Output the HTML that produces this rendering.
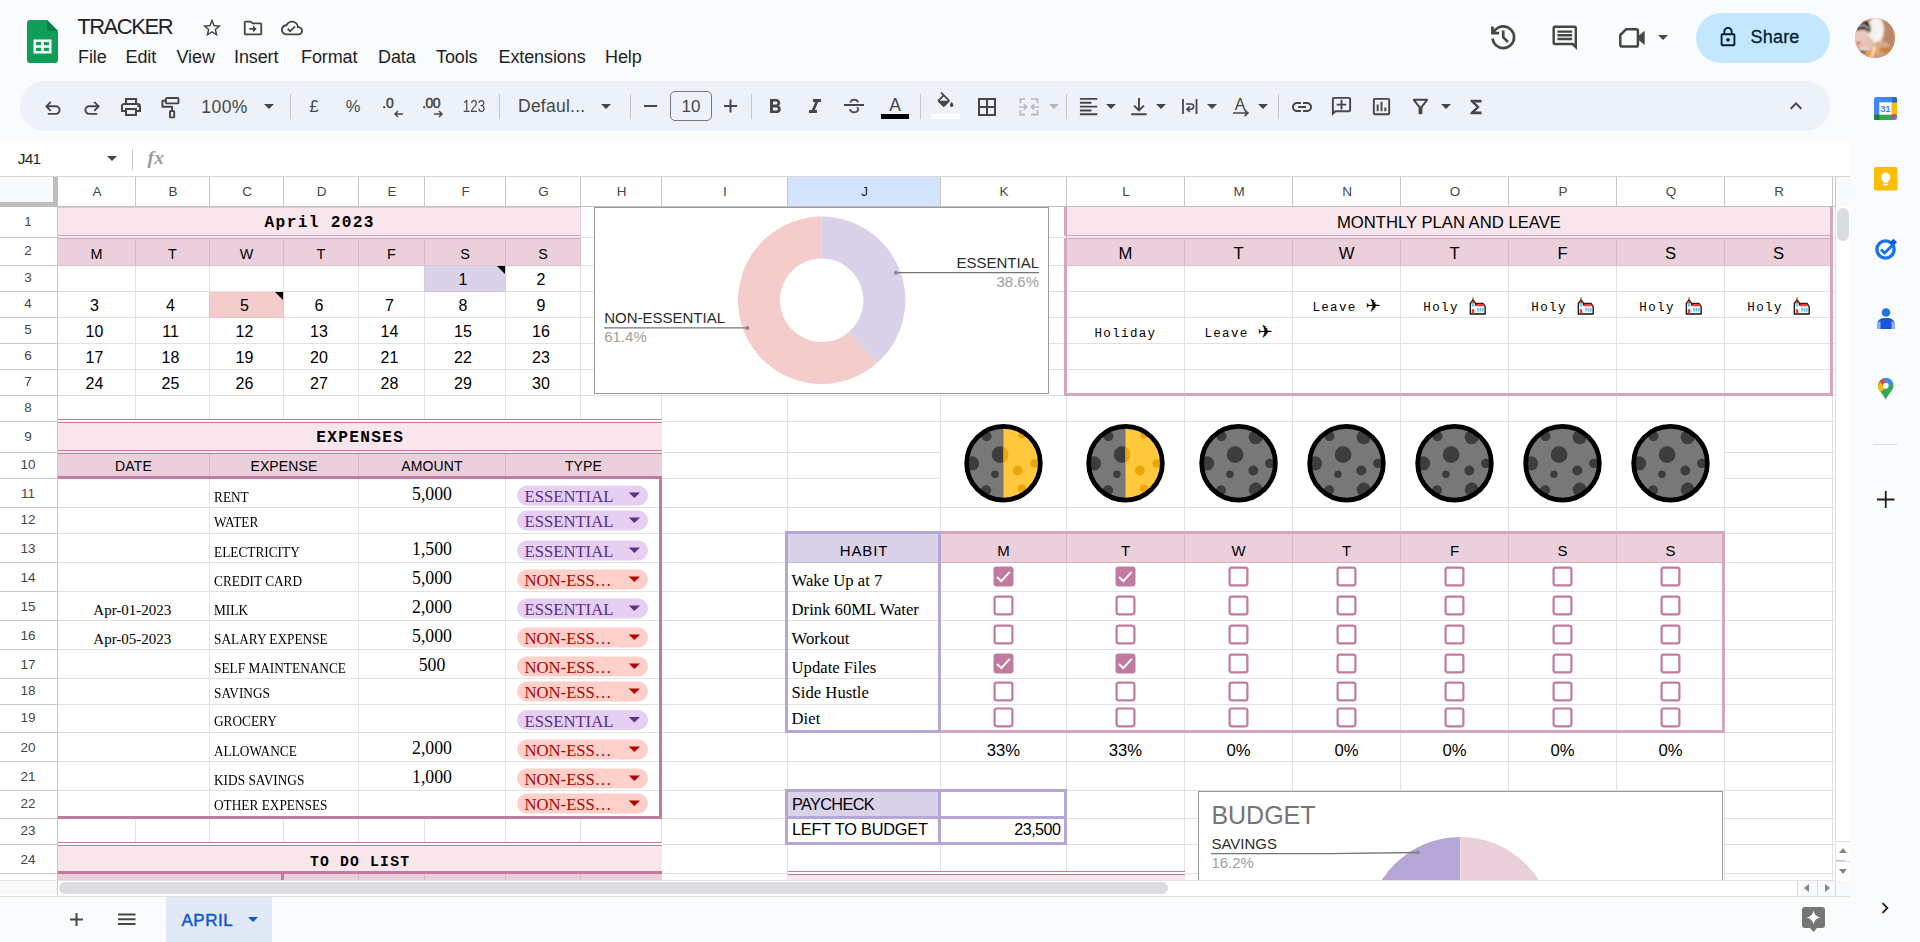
<!DOCTYPE html><html lang="en"><head><meta charset="utf-8"><title>TRACKER - Google Sheets</title><style>
html,body{margin:0;padding:0}body{width:1920px;height:942px;position:relative;overflow:hidden;background:#f9fbfd;font-family:"Liberation Sans",sans-serif}
.t{position:absolute;white-space:nowrap;line-height:1}.a{position:absolute}svg{display:block;overflow:visible}.chw{display:inline-block;position:relative;width:18px;height:0}.chw svg{position:absolute;left:1px;top:-14px}
#sheet{position:absolute;left:0;top:0;width:1850px;height:880px;overflow:hidden}
</style></head><body>
<main id="sheet" aria-label="Spreadsheet grid">
<svg class="a" style="left:0;top:0" width="1850" height="942" viewBox="0 0 1850 942" shape-rendering="crispEdges" aria-hidden="true">
<rect x="0" y="177" width="1850" height="703" fill="#fff"/>
<rect x="135" y="207" width="1" height="673" fill="#e1e1e1"/>
<rect x="209" y="207" width="1" height="673" fill="#e1e1e1"/>
<rect x="283" y="207" width="1" height="673" fill="#e1e1e1"/>
<rect x="358" y="207" width="1" height="673" fill="#e1e1e1"/>
<rect x="424" y="207" width="1" height="673" fill="#e1e1e1"/>
<rect x="505" y="207" width="1" height="673" fill="#e1e1e1"/>
<rect x="580" y="207" width="1" height="673" fill="#e1e1e1"/>
<rect x="661" y="207" width="1" height="673" fill="#e1e1e1"/>
<rect x="787" y="207" width="1" height="673" fill="#e1e1e1"/>
<rect x="940" y="207" width="1" height="673" fill="#e1e1e1"/>
<rect x="1066" y="207" width="1" height="673" fill="#e1e1e1"/>
<rect x="1184" y="207" width="1" height="673" fill="#e1e1e1"/>
<rect x="1292" y="207" width="1" height="673" fill="#e1e1e1"/>
<rect x="1400" y="207" width="1" height="673" fill="#e1e1e1"/>
<rect x="1508" y="207" width="1" height="673" fill="#e1e1e1"/>
<rect x="1616" y="207" width="1" height="673" fill="#e1e1e1"/>
<rect x="1724" y="207" width="1" height="673" fill="#e1e1e1"/>
<rect x="1832" y="207" width="1" height="673" fill="#e1e1e1"/>
<rect x="1835" y="207" width="1" height="673" fill="#e1e1e1"/>
<rect x="58" y="237" width="1778" height="1" fill="#e1e1e1"/>
<rect x="58" y="265" width="1778" height="1" fill="#e1e1e1"/>
<rect x="58" y="291" width="1778" height="1" fill="#e1e1e1"/>
<rect x="58" y="317" width="1778" height="1" fill="#e1e1e1"/>
<rect x="58" y="343" width="1778" height="1" fill="#e1e1e1"/>
<rect x="58" y="369" width="1778" height="1" fill="#e1e1e1"/>
<rect x="58" y="395" width="1778" height="1" fill="#e1e1e1"/>
<rect x="58" y="421" width="1778" height="1" fill="#e1e1e1"/>
<rect x="58" y="452" width="1778" height="1" fill="#e1e1e1"/>
<rect x="58" y="478" width="1778" height="1" fill="#e1e1e1"/>
<rect x="58" y="507" width="1778" height="1" fill="#e1e1e1"/>
<rect x="58" y="533" width="1778" height="1" fill="#e1e1e1"/>
<rect x="58" y="562" width="1778" height="1" fill="#e1e1e1"/>
<rect x="58" y="591" width="1778" height="1" fill="#e1e1e1"/>
<rect x="58" y="620" width="1778" height="1" fill="#e1e1e1"/>
<rect x="58" y="649" width="1778" height="1" fill="#e1e1e1"/>
<rect x="58" y="678" width="1778" height="1" fill="#e1e1e1"/>
<rect x="58" y="704" width="1778" height="1" fill="#e1e1e1"/>
<rect x="58" y="732" width="1778" height="1" fill="#e1e1e1"/>
<rect x="58" y="761" width="1778" height="1" fill="#e1e1e1"/>
<rect x="58" y="790" width="1778" height="1" fill="#e1e1e1"/>
<rect x="58" y="818" width="1778" height="1" fill="#e1e1e1"/>
<rect x="58" y="844" width="1778" height="1" fill="#e1e1e1"/>
<rect x="58" y="873" width="1778" height="1" fill="#e1e1e1"/>
<rect x="58" y="479" width="151" height="28" fill="#fff"/>
<rect x="210" y="479" width="148" height="28" fill="#fff"/>
<rect x="359" y="479" width="146" height="28" fill="#fff"/>
<rect x="506" y="479" width="155" height="28" fill="#fff"/>
<rect x="58" y="508" width="151" height="25" fill="#fff"/>
<rect x="210" y="508" width="148" height="25" fill="#fff"/>
<rect x="359" y="508" width="146" height="25" fill="#fff"/>
<rect x="506" y="508" width="155" height="25" fill="#fff"/>
<rect x="58" y="534" width="151" height="28" fill="#fff"/>
<rect x="210" y="534" width="148" height="28" fill="#fff"/>
<rect x="359" y="534" width="146" height="28" fill="#fff"/>
<rect x="506" y="534" width="155" height="28" fill="#fff"/>
<rect x="58" y="563" width="151" height="28" fill="#fff"/>
<rect x="210" y="563" width="148" height="28" fill="#fff"/>
<rect x="359" y="563" width="146" height="28" fill="#fff"/>
<rect x="506" y="563" width="155" height="28" fill="#fff"/>
<rect x="58" y="592" width="151" height="28" fill="#fff"/>
<rect x="210" y="592" width="148" height="28" fill="#fff"/>
<rect x="359" y="592" width="146" height="28" fill="#fff"/>
<rect x="506" y="592" width="155" height="28" fill="#fff"/>
<rect x="58" y="621" width="151" height="28" fill="#fff"/>
<rect x="210" y="621" width="148" height="28" fill="#fff"/>
<rect x="359" y="621" width="146" height="28" fill="#fff"/>
<rect x="506" y="621" width="155" height="28" fill="#fff"/>
<rect x="58" y="650" width="151" height="28" fill="#fff"/>
<rect x="210" y="650" width="148" height="28" fill="#fff"/>
<rect x="359" y="650" width="146" height="28" fill="#fff"/>
<rect x="506" y="650" width="155" height="28" fill="#fff"/>
<rect x="58" y="679" width="151" height="25" fill="#fff"/>
<rect x="210" y="679" width="148" height="25" fill="#fff"/>
<rect x="359" y="679" width="146" height="25" fill="#fff"/>
<rect x="506" y="679" width="155" height="25" fill="#fff"/>
<rect x="58" y="705" width="151" height="27" fill="#fff"/>
<rect x="210" y="705" width="148" height="27" fill="#fff"/>
<rect x="359" y="705" width="146" height="27" fill="#fff"/>
<rect x="506" y="705" width="155" height="27" fill="#fff"/>
<rect x="58" y="733" width="151" height="28" fill="#fff"/>
<rect x="210" y="733" width="148" height="28" fill="#fff"/>
<rect x="359" y="733" width="146" height="28" fill="#fff"/>
<rect x="506" y="733" width="155" height="28" fill="#fff"/>
<rect x="58" y="762" width="151" height="28" fill="#fff"/>
<rect x="210" y="762" width="148" height="28" fill="#fff"/>
<rect x="359" y="762" width="146" height="28" fill="#fff"/>
<rect x="506" y="762" width="155" height="28" fill="#fff"/>
<rect x="58" y="791" width="151" height="27" fill="#fff"/>
<rect x="210" y="791" width="148" height="27" fill="#fff"/>
<rect x="359" y="791" width="146" height="27" fill="#fff"/>
<rect x="506" y="791" width="155" height="27" fill="#fff"/>
<rect x="941" y="422" width="125" height="85" fill="#fff"/>
<rect x="1067" y="422" width="117" height="85" fill="#fff"/>
<rect x="1185" y="422" width="107" height="85" fill="#fff"/>
<rect x="1293" y="422" width="107" height="85" fill="#fff"/>
<rect x="1401" y="422" width="107" height="85" fill="#fff"/>
<rect x="1509" y="422" width="107" height="85" fill="#fff"/>
<rect x="1617" y="422" width="107" height="85" fill="#fff"/>
<rect x="58" y="207" width="523" height="28" fill="#f9e6ed"/>
<rect x="58" y="207" width="523" height="1" fill="#e9c3d3"/>
<rect x="58" y="235" width="523" height="1" fill="#d5a6bd"/>
<rect x="58" y="236" width="523" height="2" fill="#f8e6ed"/>
<rect x="58" y="238" width="523" height="1" fill="#d5a6bd"/>
<rect x="58" y="239" width="523" height="27" fill="#ebcfdb"/>
<rect x="135" y="239" width="1" height="27" fill="#d9b9c8"/>
<rect x="209" y="239" width="1" height="27" fill="#d9b9c8"/>
<rect x="283" y="239" width="1" height="27" fill="#d9b9c8"/>
<rect x="358" y="239" width="1" height="27" fill="#d9b9c8"/>
<rect x="424" y="239" width="1" height="27" fill="#d9b9c8"/>
<rect x="505" y="239" width="1" height="27" fill="#d9b9c8"/>
<rect x="58" y="265" width="523" height="1" fill="#dcbfcc"/>
<rect x="580" y="207" width="1" height="28" fill="#ead3dc"/>
<rect x="580" y="239" width="1" height="27" fill="#d9bccb"/>
<rect x="424" y="266" width="82" height="26" fill="#cfc8df"/>
<rect x="425" y="266" width="80" height="25" fill="#d9d2e9"/>
<rect x="209" y="292" width="75" height="26" fill="#e9c2c2"/>
<rect x="210" y="292" width="73" height="25" fill="#f4cccc"/>
<polygon points="497,266 505,266 505,274" fill="#000" shape-rendering="geometricPrecision"/>
<polygon points="275,292 283,292 283,300" fill="#000" shape-rendering="geometricPrecision"/>
<rect x="58" y="419" width="604" height="1" fill="#c27ba0"/>
<rect x="58" y="420" width="604" height="2" fill="#fff"/>
<rect x="58" y="422" width="604" height="1" fill="#c27ba0"/>
<rect x="58" y="423" width="604" height="27" fill="#f9e6ed"/>
<rect x="58" y="450" width="604" height="1" fill="#c27ba0"/>
<rect x="58" y="451" width="604" height="2" fill="#f8e6ed"/>
<rect x="58" y="453" width="604" height="1" fill="#c27ba0"/>
<rect x="58" y="454" width="604" height="22" fill="#ebcfdb"/>
<rect x="209" y="454" width="1" height="22" fill="#d9b9c8"/>
<rect x="358" y="454" width="1" height="22" fill="#d9b9c8"/>
<rect x="505" y="454" width="1" height="22" fill="#d9b9c8"/>
<rect x="58" y="476" width="604" height="3" fill="#c27ba0"/>
<rect x="659" y="476" width="3" height="343" fill="#c27ba0"/>
<rect x="58" y="816" width="604" height="3" fill="#c27ba0"/>
<rect x="517" y="485.5" width="131" height="20" rx="10" fill="#e6cff2" shape-rendering="geometricPrecision"/>
<polygon points="628.75,492.5 640,492.5 634.4,498.1" fill="#5a3286" shape-rendering="geometricPrecision"/>
<rect x="517" y="510.5" width="131" height="20" rx="10" fill="#e6cff2" shape-rendering="geometricPrecision"/>
<polygon points="628.75,517.5 640,517.5 634.4,523.1" fill="#5a3286" shape-rendering="geometricPrecision"/>
<rect x="517" y="540.5" width="131" height="20" rx="10" fill="#e6cff2" shape-rendering="geometricPrecision"/>
<polygon points="628.75,547.5 640,547.5 634.4,553.1" fill="#5a3286" shape-rendering="geometricPrecision"/>
<rect x="517" y="569.5" width="131" height="20" rx="10" fill="#ffcfc9" shape-rendering="geometricPrecision"/>
<polygon points="628.75,576.5 640,576.5 634.4,582.1" fill="#b10202" shape-rendering="geometricPrecision"/>
<rect x="517" y="598.5" width="131" height="20" rx="10" fill="#e6cff2" shape-rendering="geometricPrecision"/>
<polygon points="628.75,605.5 640,605.5 634.4,611.1" fill="#5a3286" shape-rendering="geometricPrecision"/>
<rect x="517" y="627.5" width="131" height="20" rx="10" fill="#ffcfc9" shape-rendering="geometricPrecision"/>
<polygon points="628.75,634.5 640,634.5 634.4,640.1" fill="#b10202" shape-rendering="geometricPrecision"/>
<rect x="517" y="656.5" width="131" height="20" rx="10" fill="#ffcfc9" shape-rendering="geometricPrecision"/>
<polygon points="628.75,663.5 640,663.5 634.4,669.1" fill="#b10202" shape-rendering="geometricPrecision"/>
<rect x="517" y="681.5" width="131" height="20" rx="10" fill="#ffcfc9" shape-rendering="geometricPrecision"/>
<polygon points="628.75,688.5 640,688.5 634.4,694.1" fill="#b10202" shape-rendering="geometricPrecision"/>
<rect x="517" y="710" width="131" height="20" rx="10" fill="#e6cff2" shape-rendering="geometricPrecision"/>
<polygon points="628.75,717 640,717 634.4,722.6" fill="#5a3286" shape-rendering="geometricPrecision"/>
<rect x="517" y="739.5" width="131" height="20" rx="10" fill="#ffcfc9" shape-rendering="geometricPrecision"/>
<polygon points="628.75,746.5 640,746.5 634.4,752.1" fill="#b10202" shape-rendering="geometricPrecision"/>
<rect x="517" y="768.5" width="131" height="20" rx="10" fill="#ffcfc9" shape-rendering="geometricPrecision"/>
<polygon points="628.75,775.5 640,775.5 634.4,781.1" fill="#b10202" shape-rendering="geometricPrecision"/>
<rect x="517" y="793.6" width="131" height="20" rx="10" fill="#ffcfc9" shape-rendering="geometricPrecision"/>
<polygon points="628.75,800.6 640,800.6 634.4,806.2" fill="#b10202" shape-rendering="geometricPrecision"/>
<rect x="58" y="842" width="604" height="1" fill="#c27ba0"/>
<rect x="58" y="843" width="604" height="2" fill="#fff"/>
<rect x="58" y="845" width="604" height="1" fill="#c27ba0"/>
<rect x="58" y="846" width="604" height="25" fill="#f9e6ed"/>
<rect x="58" y="871" width="604" height="3" fill="#c27ba0"/>
<rect x="58" y="874" width="604" height="6" fill="#ebcfdb"/>
<rect x="281" y="874" width="3" height="6" fill="#c27ba0"/>
<rect x="358" y="874" width="1" height="6" fill="#d9b9c8"/>
<rect x="424" y="874" width="1" height="6" fill="#d9b9c8"/>
<rect x="505" y="874" width="1" height="6" fill="#d9b9c8"/>
<rect x="580" y="874" width="1" height="6" fill="#d9b9c8"/>
<rect x="1067" y="207" width="763" height="28" fill="#f9e6ed"/>
<rect x="1067" y="235" width="763" height="1" fill="#d5a6bd"/>
<rect x="1067" y="236" width="763" height="2" fill="#f8e6ed"/>
<rect x="1067" y="238" width="763" height="1" fill="#d5a6bd"/>
<rect x="1067" y="239" width="763" height="27" fill="#ebcfdb"/>
<rect x="1184" y="239" width="1" height="27" fill="#d9b9c8"/>
<rect x="1292" y="239" width="1" height="27" fill="#d9b9c8"/>
<rect x="1400" y="239" width="1" height="27" fill="#d9b9c8"/>
<rect x="1508" y="239" width="1" height="27" fill="#d9b9c8"/>
<rect x="1616" y="239" width="1" height="27" fill="#d9b9c8"/>
<rect x="1724" y="239" width="1" height="27" fill="#d9b9c8"/>
<rect x="1067" y="265" width="763" height="1" fill="#dcbfcc"/>
<rect x="1064" y="207" width="3" height="189" fill="#d5a6bd"/>
<rect x="1830" y="207" width="3" height="189" fill="#d5a6bd"/>
<rect x="1064" y="393" width="769" height="3" fill="#d5a6bd"/>
<rect x="1064" y="236" width="2" height="2" fill="#fff"/>
<defs><clipPath id="mc"><circle r="37"/></clipPath><clipPath id="mh"><rect x="0" y="-40" width="40" height="80"/></clipPath></defs>
<g transform="translate(1003.5,463.2)" shape-rendering="geometricPrecision"><circle r="37" fill="#787878"/><g clip-path="url(#mc)"><circle cx="-3.4" cy="-8.6" r="8.4" fill="#3d3d3d"/><circle cx="-31.5" cy="0.2" r="7.1" fill="#3d3d3d"/><circle cx="17.25" cy="-26" r="7" fill="#3d3d3d"/><circle cx="-17" cy="-27" r="5" fill="#3d3d3d"/><circle cx="31.3" cy="0.2" r="4.7" fill="#3d3d3d"/><circle cx="14.8" cy="7.3" r="5" fill="#3d3d3d"/><circle cx="-8.6" cy="11" r="3.75" fill="#3d3d3d"/><circle cx="-17.4" cy="27" r="5" fill="#3d3d3d"/><circle cx="17.25" cy="26.4" r="7" fill="#3d3d3d"/><g clip-path="url(#mh)"><circle r="37" fill="#ffc83d"/><circle cx="-3.4" cy="-8.6" r="8.4" fill="#eca60b"/><circle cx="18.4" cy="-28" r="3.4" fill="#eca60b"/><circle cx="31.1" cy="0.2" r="4.1" fill="#eca60b"/><circle cx="14.25" cy="7.3" r="5" fill="#eca60b"/><circle cx="18.4" cy="25.5" r="4.1" fill="#eca60b"/></g></g><circle r="36.85" fill="none" stroke="#000" stroke-width="4.7"/></g>
<g transform="translate(1125.5,463.2)" shape-rendering="geometricPrecision"><circle r="37" fill="#787878"/><g clip-path="url(#mc)"><circle cx="-3.4" cy="-8.6" r="8.4" fill="#3d3d3d"/><circle cx="-31.5" cy="0.2" r="7.1" fill="#3d3d3d"/><circle cx="17.25" cy="-26" r="7" fill="#3d3d3d"/><circle cx="-17" cy="-27" r="5" fill="#3d3d3d"/><circle cx="31.3" cy="0.2" r="4.7" fill="#3d3d3d"/><circle cx="14.8" cy="7.3" r="5" fill="#3d3d3d"/><circle cx="-8.6" cy="11" r="3.75" fill="#3d3d3d"/><circle cx="-17.4" cy="27" r="5" fill="#3d3d3d"/><circle cx="17.25" cy="26.4" r="7" fill="#3d3d3d"/><g clip-path="url(#mh)"><circle r="37" fill="#ffc83d"/><circle cx="-3.4" cy="-8.6" r="8.4" fill="#eca60b"/><circle cx="18.4" cy="-28" r="3.4" fill="#eca60b"/><circle cx="31.1" cy="0.2" r="4.1" fill="#eca60b"/><circle cx="14.25" cy="7.3" r="5" fill="#eca60b"/><circle cx="18.4" cy="25.5" r="4.1" fill="#eca60b"/></g></g><circle r="36.85" fill="none" stroke="#000" stroke-width="4.7"/></g>
<g transform="translate(1238.5,463.2)" shape-rendering="geometricPrecision"><circle r="37" fill="#787878"/><g clip-path="url(#mc)"><circle cx="-3.4" cy="-8.6" r="8.4" fill="#3d3d3d"/><circle cx="-31.5" cy="0.2" r="7.1" fill="#3d3d3d"/><circle cx="17.25" cy="-26" r="7" fill="#3d3d3d"/><circle cx="-17" cy="-27" r="5" fill="#3d3d3d"/><circle cx="31.3" cy="0.2" r="4.7" fill="#3d3d3d"/><circle cx="14.8" cy="7.3" r="5" fill="#3d3d3d"/><circle cx="-8.6" cy="11" r="3.75" fill="#3d3d3d"/><circle cx="-17.4" cy="27" r="5" fill="#3d3d3d"/><circle cx="17.25" cy="26.4" r="7" fill="#3d3d3d"/></g><circle r="36.85" fill="none" stroke="#000" stroke-width="4.7"/></g>
<g transform="translate(1346.5,463.2)" shape-rendering="geometricPrecision"><circle r="37" fill="#787878"/><g clip-path="url(#mc)"><circle cx="-3.4" cy="-8.6" r="8.4" fill="#3d3d3d"/><circle cx="-31.5" cy="0.2" r="7.1" fill="#3d3d3d"/><circle cx="17.25" cy="-26" r="7" fill="#3d3d3d"/><circle cx="-17" cy="-27" r="5" fill="#3d3d3d"/><circle cx="31.3" cy="0.2" r="4.7" fill="#3d3d3d"/><circle cx="14.8" cy="7.3" r="5" fill="#3d3d3d"/><circle cx="-8.6" cy="11" r="3.75" fill="#3d3d3d"/><circle cx="-17.4" cy="27" r="5" fill="#3d3d3d"/><circle cx="17.25" cy="26.4" r="7" fill="#3d3d3d"/></g><circle r="36.85" fill="none" stroke="#000" stroke-width="4.7"/></g>
<g transform="translate(1454.5,463.2)" shape-rendering="geometricPrecision"><circle r="37" fill="#787878"/><g clip-path="url(#mc)"><circle cx="-3.4" cy="-8.6" r="8.4" fill="#3d3d3d"/><circle cx="-31.5" cy="0.2" r="7.1" fill="#3d3d3d"/><circle cx="17.25" cy="-26" r="7" fill="#3d3d3d"/><circle cx="-17" cy="-27" r="5" fill="#3d3d3d"/><circle cx="31.3" cy="0.2" r="4.7" fill="#3d3d3d"/><circle cx="14.8" cy="7.3" r="5" fill="#3d3d3d"/><circle cx="-8.6" cy="11" r="3.75" fill="#3d3d3d"/><circle cx="-17.4" cy="27" r="5" fill="#3d3d3d"/><circle cx="17.25" cy="26.4" r="7" fill="#3d3d3d"/></g><circle r="36.85" fill="none" stroke="#000" stroke-width="4.7"/></g>
<g transform="translate(1562.5,463.2)" shape-rendering="geometricPrecision"><circle r="37" fill="#787878"/><g clip-path="url(#mc)"><circle cx="-3.4" cy="-8.6" r="8.4" fill="#3d3d3d"/><circle cx="-31.5" cy="0.2" r="7.1" fill="#3d3d3d"/><circle cx="17.25" cy="-26" r="7" fill="#3d3d3d"/><circle cx="-17" cy="-27" r="5" fill="#3d3d3d"/><circle cx="31.3" cy="0.2" r="4.7" fill="#3d3d3d"/><circle cx="14.8" cy="7.3" r="5" fill="#3d3d3d"/><circle cx="-8.6" cy="11" r="3.75" fill="#3d3d3d"/><circle cx="-17.4" cy="27" r="5" fill="#3d3d3d"/><circle cx="17.25" cy="26.4" r="7" fill="#3d3d3d"/></g><circle r="36.85" fill="none" stroke="#000" stroke-width="4.7"/></g>
<g transform="translate(1670.5,463.2)" shape-rendering="geometricPrecision"><circle r="37" fill="#787878"/><g clip-path="url(#mc)"><circle cx="-3.4" cy="-8.6" r="8.4" fill="#3d3d3d"/><circle cx="-31.5" cy="0.2" r="7.1" fill="#3d3d3d"/><circle cx="17.25" cy="-26" r="7" fill="#3d3d3d"/><circle cx="-17" cy="-27" r="5" fill="#3d3d3d"/><circle cx="31.3" cy="0.2" r="4.7" fill="#3d3d3d"/><circle cx="14.8" cy="7.3" r="5" fill="#3d3d3d"/><circle cx="-8.6" cy="11" r="3.75" fill="#3d3d3d"/><circle cx="-17.4" cy="27" r="5" fill="#3d3d3d"/><circle cx="17.25" cy="26.4" r="7" fill="#3d3d3d"/></g><circle r="36.85" fill="none" stroke="#000" stroke-width="4.7"/></g>
<rect x="788" y="534" width="150" height="29" fill="#d9d2e9"/>
<rect x="941" y="534" width="781" height="29" fill="#ebcfdb"/>
<rect x="941" y="531" width="784" height="3" fill="#d5a6bd"/>
<rect x="1066" y="534" width="1" height="29" fill="#d9b9c8"/>
<rect x="1184" y="534" width="1" height="29" fill="#d9b9c8"/>
<rect x="1292" y="534" width="1" height="29" fill="#d9b9c8"/>
<rect x="1400" y="534" width="1" height="29" fill="#d9b9c8"/>
<rect x="1508" y="534" width="1" height="29" fill="#d9b9c8"/>
<rect x="1616" y="534" width="1" height="29" fill="#d9b9c8"/>
<rect x="941" y="562" width="781" height="1" fill="#d0b0be"/>
<rect x="1722" y="531" width="3" height="202" fill="#d5a6bd"/>
<rect x="941" y="730" width="784" height="3" fill="#d5a6bd"/>
<rect x="785" y="531" width="3" height="202" fill="#b4a7d6"/>
<rect x="938" y="531" width="3" height="202" fill="#b4a7d6"/>
<rect x="785" y="531" width="156" height="3" fill="#b4a7d6"/>
<rect x="785" y="730" width="156" height="3" fill="#b4a7d6"/>
<rect x="788" y="562" width="150" height="1" fill="#c5bcd9"/>
<g shape-rendering="geometricPrecision"><rect x="993.5" y="566.5" width="20" height="20" rx="3" fill="#c27ba0"/><path d="M997.0 577.0 L1001.3 581.1 L1009.8 571.9" fill="none" stroke="#fff" stroke-width="2"/></g>
<g shape-rendering="geometricPrecision"><rect x="1115.5" y="566.5" width="20" height="20" rx="3" fill="#c27ba0"/><path d="M1119.0 577.0 L1123.3 581.1 L1131.8 571.9" fill="none" stroke="#fff" stroke-width="2"/></g>
<rect x="1229.6" y="567.6" width="17.8" height="17.8" rx="2.2" fill="#fff" stroke="#c27ba0" stroke-width="2.2" shape-rendering="geometricPrecision"/>
<rect x="1337.6" y="567.6" width="17.8" height="17.8" rx="2.2" fill="#fff" stroke="#c27ba0" stroke-width="2.2" shape-rendering="geometricPrecision"/>
<rect x="1445.6" y="567.6" width="17.8" height="17.8" rx="2.2" fill="#fff" stroke="#c27ba0" stroke-width="2.2" shape-rendering="geometricPrecision"/>
<rect x="1553.6" y="567.6" width="17.8" height="17.8" rx="2.2" fill="#fff" stroke="#c27ba0" stroke-width="2.2" shape-rendering="geometricPrecision"/>
<rect x="1661.6" y="567.6" width="17.8" height="17.8" rx="2.2" fill="#fff" stroke="#c27ba0" stroke-width="2.2" shape-rendering="geometricPrecision"/>
<rect x="994.6" y="596.6" width="17.8" height="17.8" rx="2.2" fill="#fff" stroke="#c27ba0" stroke-width="2.2" shape-rendering="geometricPrecision"/>
<rect x="1116.6" y="596.6" width="17.8" height="17.8" rx="2.2" fill="#fff" stroke="#c27ba0" stroke-width="2.2" shape-rendering="geometricPrecision"/>
<rect x="1229.6" y="596.6" width="17.8" height="17.8" rx="2.2" fill="#fff" stroke="#c27ba0" stroke-width="2.2" shape-rendering="geometricPrecision"/>
<rect x="1337.6" y="596.6" width="17.8" height="17.8" rx="2.2" fill="#fff" stroke="#c27ba0" stroke-width="2.2" shape-rendering="geometricPrecision"/>
<rect x="1445.6" y="596.6" width="17.8" height="17.8" rx="2.2" fill="#fff" stroke="#c27ba0" stroke-width="2.2" shape-rendering="geometricPrecision"/>
<rect x="1553.6" y="596.6" width="17.8" height="17.8" rx="2.2" fill="#fff" stroke="#c27ba0" stroke-width="2.2" shape-rendering="geometricPrecision"/>
<rect x="1661.6" y="596.6" width="17.8" height="17.8" rx="2.2" fill="#fff" stroke="#c27ba0" stroke-width="2.2" shape-rendering="geometricPrecision"/>
<rect x="994.6" y="625.6" width="17.8" height="17.8" rx="2.2" fill="#fff" stroke="#c27ba0" stroke-width="2.2" shape-rendering="geometricPrecision"/>
<rect x="1116.6" y="625.6" width="17.8" height="17.8" rx="2.2" fill="#fff" stroke="#c27ba0" stroke-width="2.2" shape-rendering="geometricPrecision"/>
<rect x="1229.6" y="625.6" width="17.8" height="17.8" rx="2.2" fill="#fff" stroke="#c27ba0" stroke-width="2.2" shape-rendering="geometricPrecision"/>
<rect x="1337.6" y="625.6" width="17.8" height="17.8" rx="2.2" fill="#fff" stroke="#c27ba0" stroke-width="2.2" shape-rendering="geometricPrecision"/>
<rect x="1445.6" y="625.6" width="17.8" height="17.8" rx="2.2" fill="#fff" stroke="#c27ba0" stroke-width="2.2" shape-rendering="geometricPrecision"/>
<rect x="1553.6" y="625.6" width="17.8" height="17.8" rx="2.2" fill="#fff" stroke="#c27ba0" stroke-width="2.2" shape-rendering="geometricPrecision"/>
<rect x="1661.6" y="625.6" width="17.8" height="17.8" rx="2.2" fill="#fff" stroke="#c27ba0" stroke-width="2.2" shape-rendering="geometricPrecision"/>
<g shape-rendering="geometricPrecision"><rect x="993.5" y="653.5" width="20" height="20" rx="3" fill="#c27ba0"/><path d="M997.0 664.0 L1001.3 668.1 L1009.8 658.9" fill="none" stroke="#fff" stroke-width="2"/></g>
<g shape-rendering="geometricPrecision"><rect x="1115.5" y="653.5" width="20" height="20" rx="3" fill="#c27ba0"/><path d="M1119.0 664.0 L1123.3 668.1 L1131.8 658.9" fill="none" stroke="#fff" stroke-width="2"/></g>
<rect x="1229.6" y="654.6" width="17.8" height="17.8" rx="2.2" fill="#fff" stroke="#c27ba0" stroke-width="2.2" shape-rendering="geometricPrecision"/>
<rect x="1337.6" y="654.6" width="17.8" height="17.8" rx="2.2" fill="#fff" stroke="#c27ba0" stroke-width="2.2" shape-rendering="geometricPrecision"/>
<rect x="1445.6" y="654.6" width="17.8" height="17.8" rx="2.2" fill="#fff" stroke="#c27ba0" stroke-width="2.2" shape-rendering="geometricPrecision"/>
<rect x="1553.6" y="654.6" width="17.8" height="17.8" rx="2.2" fill="#fff" stroke="#c27ba0" stroke-width="2.2" shape-rendering="geometricPrecision"/>
<rect x="1661.6" y="654.6" width="17.8" height="17.8" rx="2.2" fill="#fff" stroke="#c27ba0" stroke-width="2.2" shape-rendering="geometricPrecision"/>
<rect x="994.6" y="682.6" width="17.8" height="17.8" rx="2.2" fill="#fff" stroke="#c27ba0" stroke-width="2.2" shape-rendering="geometricPrecision"/>
<rect x="1116.6" y="682.6" width="17.8" height="17.8" rx="2.2" fill="#fff" stroke="#c27ba0" stroke-width="2.2" shape-rendering="geometricPrecision"/>
<rect x="1229.6" y="682.6" width="17.8" height="17.8" rx="2.2" fill="#fff" stroke="#c27ba0" stroke-width="2.2" shape-rendering="geometricPrecision"/>
<rect x="1337.6" y="682.6" width="17.8" height="17.8" rx="2.2" fill="#fff" stroke="#c27ba0" stroke-width="2.2" shape-rendering="geometricPrecision"/>
<rect x="1445.6" y="682.6" width="17.8" height="17.8" rx="2.2" fill="#fff" stroke="#c27ba0" stroke-width="2.2" shape-rendering="geometricPrecision"/>
<rect x="1553.6" y="682.6" width="17.8" height="17.8" rx="2.2" fill="#fff" stroke="#c27ba0" stroke-width="2.2" shape-rendering="geometricPrecision"/>
<rect x="1661.6" y="682.6" width="17.8" height="17.8" rx="2.2" fill="#fff" stroke="#c27ba0" stroke-width="2.2" shape-rendering="geometricPrecision"/>
<rect x="994.6" y="708.5" width="17.8" height="17.8" rx="2.2" fill="#fff" stroke="#c27ba0" stroke-width="2.2" shape-rendering="geometricPrecision"/>
<rect x="1116.6" y="708.5" width="17.8" height="17.8" rx="2.2" fill="#fff" stroke="#c27ba0" stroke-width="2.2" shape-rendering="geometricPrecision"/>
<rect x="1229.6" y="708.5" width="17.8" height="17.8" rx="2.2" fill="#fff" stroke="#c27ba0" stroke-width="2.2" shape-rendering="geometricPrecision"/>
<rect x="1337.6" y="708.5" width="17.8" height="17.8" rx="2.2" fill="#fff" stroke="#c27ba0" stroke-width="2.2" shape-rendering="geometricPrecision"/>
<rect x="1445.6" y="708.5" width="17.8" height="17.8" rx="2.2" fill="#fff" stroke="#c27ba0" stroke-width="2.2" shape-rendering="geometricPrecision"/>
<rect x="1553.6" y="708.5" width="17.8" height="17.8" rx="2.2" fill="#fff" stroke="#c27ba0" stroke-width="2.2" shape-rendering="geometricPrecision"/>
<rect x="1661.6" y="708.5" width="17.8" height="17.8" rx="2.2" fill="#fff" stroke="#c27ba0" stroke-width="2.2" shape-rendering="geometricPrecision"/>
<rect x="788" y="792" width="150" height="24" fill="#d9d2e9"/>
<rect x="785" y="789" width="282" height="3" fill="#b4a7d6"/>
<rect x="785" y="816" width="282" height="3" fill="#b4a7d6"/>
<rect x="785" y="842" width="282" height="3" fill="#b4a7d6"/>
<rect x="785" y="789" width="3" height="56" fill="#b4a7d6"/>
<rect x="938" y="789" width="3" height="56" fill="#b4a7d6"/>
<rect x="1064" y="789" width="3" height="56" fill="#b4a7d6"/>
<rect x="788" y="871" width="397" height="1" fill="#c27ba0"/>
<rect x="788" y="872" width="397" height="2" fill="#fff"/>
<rect x="788" y="874" width="397" height="1" fill="#c27ba0"/>
<rect x="788" y="875" width="397" height="5" fill="#f9e6ed"/>
<rect x="594" y="207" width="455" height="187" fill="#999"/>
<rect x="595" y="208" width="453" height="185" fill="#fff"/>
<g shape-rendering="geometricPrecision">
<path d="M821.70 216.60 A83.7 83.7 0 0 1 876.66 363.43 L849.08 331.75 A41.7 41.7 0 0 0 821.70 258.60 Z" fill="#d9d2e9"/>
<path d="M876.66 363.43 A83.7 83.7 0 1 1 821.70 216.60 L821.70 258.60 A41.7 41.7 0 1 0 849.08 331.75 Z" fill="#f4cccc"/>
<path d="M895.9 272.7 H1039" stroke="#757575" stroke-width="1.3" fill="none"/><circle cx="895.9" cy="272.7" r="2" fill="#8a8a8a"/>
<path d="M604 327.9 H747.4" stroke="#757575" stroke-width="1.3" fill="none"/><circle cx="747.4" cy="327.9" r="2" fill="#8a8a8a"/>
</g>
<rect x="1198" y="791" width="525" height="110" fill="#999"/>
<rect x="1199" y="792" width="523" height="109" fill="#fff"/>
<g shape-rendering="geometricPrecision">
<path d="M1460.3 930 L1460.3 837 A93 93 0 0 0 1367.3 930 Z" fill="#b4a7d6"/>
<path d="M1460.3 930 L1460.3 837 A93 93 0 0 1 1553.3 930 Z" fill="#ebcfdb"/>
<path d="M1211 853.6 H1330 L1417.8 852.5" stroke="#757575" stroke-width="1.3" fill="none"/><circle cx="1417.8" cy="852.5" r="2" fill="#8a8a8a"/>
</g>
<rect x="0" y="176" width="1850" height="1" fill="#d5d5d5"/>
<rect x="0" y="177" width="1836" height="29" fill="#fff"/>
<rect x="788" y="177" width="152" height="29" fill="#d3e3fd"/>
<rect x="1836" y="177" width="14" height="29" fill="#f8f9fa"/>
<rect x="0" y="206" width="1836" height="1" fill="#c0c0c0"/>
<rect x="57" y="177" width="1" height="29" fill="#c7c7c7"/>
<rect x="135" y="177" width="1" height="29" fill="#c7c7c7"/>
<rect x="209" y="177" width="1" height="29" fill="#c7c7c7"/>
<rect x="283" y="177" width="1" height="29" fill="#c7c7c7"/>
<rect x="358" y="177" width="1" height="29" fill="#c7c7c7"/>
<rect x="424" y="177" width="1" height="29" fill="#c7c7c7"/>
<rect x="505" y="177" width="1" height="29" fill="#c7c7c7"/>
<rect x="580" y="177" width="1" height="29" fill="#c7c7c7"/>
<rect x="661" y="177" width="1" height="29" fill="#c7c7c7"/>
<rect x="787" y="177" width="1" height="29" fill="#c7c7c7"/>
<rect x="940" y="177" width="1" height="29" fill="#c7c7c7"/>
<rect x="1066" y="177" width="1" height="29" fill="#c7c7c7"/>
<rect x="1184" y="177" width="1" height="29" fill="#c7c7c7"/>
<rect x="1292" y="177" width="1" height="29" fill="#c7c7c7"/>
<rect x="1400" y="177" width="1" height="29" fill="#c7c7c7"/>
<rect x="1508" y="177" width="1" height="29" fill="#c7c7c7"/>
<rect x="1616" y="177" width="1" height="29" fill="#c7c7c7"/>
<rect x="1724" y="177" width="1" height="29" fill="#c7c7c7"/>
<rect x="1832" y="177" width="1" height="29" fill="#c7c7c7"/>
<rect x="1835" y="177" width="1" height="29" fill="#c7c7c7"/>
<rect x="0" y="177" width="57" height="29" fill="#f8f9fa"/>
<rect x="53" y="177" width="5" height="30" fill="#bdbdbd"/>
<rect x="0" y="202" width="58" height="5" fill="#bdbdbd"/>
<rect x="0" y="207" width="57" height="673" fill="#fff"/>
<rect x="57" y="207" width="1" height="673" fill="#c7c7c7"/>
<rect x="0" y="237" width="57" height="1" fill="#c7c7c7"/>
<rect x="0" y="265" width="57" height="1" fill="#c7c7c7"/>
<rect x="0" y="291" width="57" height="1" fill="#c7c7c7"/>
<rect x="0" y="317" width="57" height="1" fill="#c7c7c7"/>
<rect x="0" y="343" width="57" height="1" fill="#c7c7c7"/>
<rect x="0" y="369" width="57" height="1" fill="#c7c7c7"/>
<rect x="0" y="395" width="57" height="1" fill="#c7c7c7"/>
<rect x="0" y="421" width="57" height="1" fill="#c7c7c7"/>
<rect x="0" y="452" width="57" height="1" fill="#c7c7c7"/>
<rect x="0" y="478" width="57" height="1" fill="#c7c7c7"/>
<rect x="0" y="507" width="57" height="1" fill="#c7c7c7"/>
<rect x="0" y="533" width="57" height="1" fill="#c7c7c7"/>
<rect x="0" y="562" width="57" height="1" fill="#c7c7c7"/>
<rect x="0" y="591" width="57" height="1" fill="#c7c7c7"/>
<rect x="0" y="620" width="57" height="1" fill="#c7c7c7"/>
<rect x="0" y="649" width="57" height="1" fill="#c7c7c7"/>
<rect x="0" y="678" width="57" height="1" fill="#c7c7c7"/>
<rect x="0" y="704" width="57" height="1" fill="#c7c7c7"/>
<rect x="0" y="732" width="57" height="1" fill="#c7c7c7"/>
<rect x="0" y="761" width="57" height="1" fill="#c7c7c7"/>
<rect x="0" y="790" width="57" height="1" fill="#c7c7c7"/>
<rect x="0" y="818" width="57" height="1" fill="#c7c7c7"/>
<rect x="0" y="844" width="57" height="1" fill="#c7c7c7"/>
<rect x="0" y="873" width="57" height="1" fill="#c7c7c7"/>
</svg>
<section id="cells">
<div class="t" style='top:215px;font:bold 16.2px/1 "Liberation Mono", monospace;color:#000;letter-spacing:1.3px;left:19.70px;width:600px;text-align:center;'>April 2023</div>
<div class="t" style='top:247px;font:14.4px/1 "Liberation Sans", sans-serif;color:#000;left:-203.50px;width:600px;text-align:center;'>M</div>
<div class="t" style='top:247px;font:14.4px/1 "Liberation Sans", sans-serif;color:#000;left:-127.50px;width:600px;text-align:center;'>T</div>
<div class="t" style='top:247px;font:14.4px/1 "Liberation Sans", sans-serif;color:#000;left:-53.50px;width:600px;text-align:center;'>W</div>
<div class="t" style='top:247px;font:14.4px/1 "Liberation Sans", sans-serif;color:#000;left:21.00px;width:600px;text-align:center;'>T</div>
<div class="t" style='top:247px;font:14.4px/1 "Liberation Sans", sans-serif;color:#000;left:91.50px;width:600px;text-align:center;'>F</div>
<div class="t" style='top:247px;font:14.4px/1 "Liberation Sans", sans-serif;color:#000;left:165.00px;width:600px;text-align:center;'>S</div>
<div class="t" style='top:247px;font:14.4px/1 "Liberation Sans", sans-serif;color:#000;left:243.00px;width:600px;text-align:center;'>S</div>
<div class="t" style='top:272px;font:16px/1 "Liberation Sans", sans-serif;color:#000;left:163.00px;width:600px;text-align:center;'>1</div>
<div class="t" style='top:272px;font:16px/1 "Liberation Sans", sans-serif;color:#000;left:241.00px;width:600px;text-align:center;'>2</div>
<div class="t" style='top:298px;font:16px/1 "Liberation Sans", sans-serif;color:#000;left:-205.50px;width:600px;text-align:center;'>3</div>
<div class="t" style='top:298px;font:16px/1 "Liberation Sans", sans-serif;color:#000;left:-129.50px;width:600px;text-align:center;'>4</div>
<div class="t" style='top:298px;font:16px/1 "Liberation Sans", sans-serif;color:#000;left:-55.50px;width:600px;text-align:center;'>5</div>
<div class="t" style='top:298px;font:16px/1 "Liberation Sans", sans-serif;color:#000;left:19.00px;width:600px;text-align:center;'>6</div>
<div class="t" style='top:298px;font:16px/1 "Liberation Sans", sans-serif;color:#000;left:89.50px;width:600px;text-align:center;'>7</div>
<div class="t" style='top:298px;font:16px/1 "Liberation Sans", sans-serif;color:#000;left:163.00px;width:600px;text-align:center;'>8</div>
<div class="t" style='top:298px;font:16px/1 "Liberation Sans", sans-serif;color:#000;left:241.00px;width:600px;text-align:center;'>9</div>
<div class="t" style='top:324px;font:16px/1 "Liberation Sans", sans-serif;color:#000;left:-205.50px;width:600px;text-align:center;'>10</div>
<div class="t" style='top:324px;font:16px/1 "Liberation Sans", sans-serif;color:#000;left:-129.50px;width:600px;text-align:center;'>11</div>
<div class="t" style='top:324px;font:16px/1 "Liberation Sans", sans-serif;color:#000;left:-55.50px;width:600px;text-align:center;'>12</div>
<div class="t" style='top:324px;font:16px/1 "Liberation Sans", sans-serif;color:#000;left:19.00px;width:600px;text-align:center;'>13</div>
<div class="t" style='top:324px;font:16px/1 "Liberation Sans", sans-serif;color:#000;left:89.50px;width:600px;text-align:center;'>14</div>
<div class="t" style='top:324px;font:16px/1 "Liberation Sans", sans-serif;color:#000;left:163.00px;width:600px;text-align:center;'>15</div>
<div class="t" style='top:324px;font:16px/1 "Liberation Sans", sans-serif;color:#000;left:241.00px;width:600px;text-align:center;'>16</div>
<div class="t" style='top:350px;font:16px/1 "Liberation Sans", sans-serif;color:#000;left:-205.50px;width:600px;text-align:center;'>17</div>
<div class="t" style='top:350px;font:16px/1 "Liberation Sans", sans-serif;color:#000;left:-129.50px;width:600px;text-align:center;'>18</div>
<div class="t" style='top:350px;font:16px/1 "Liberation Sans", sans-serif;color:#000;left:-55.50px;width:600px;text-align:center;'>19</div>
<div class="t" style='top:350px;font:16px/1 "Liberation Sans", sans-serif;color:#000;left:19.00px;width:600px;text-align:center;'>20</div>
<div class="t" style='top:350px;font:16px/1 "Liberation Sans", sans-serif;color:#000;left:89.50px;width:600px;text-align:center;'>21</div>
<div class="t" style='top:350px;font:16px/1 "Liberation Sans", sans-serif;color:#000;left:163.00px;width:600px;text-align:center;'>22</div>
<div class="t" style='top:350px;font:16px/1 "Liberation Sans", sans-serif;color:#000;left:241.00px;width:600px;text-align:center;'>23</div>
<div class="t" style='top:376px;font:16px/1 "Liberation Sans", sans-serif;color:#000;left:-205.50px;width:600px;text-align:center;'>24</div>
<div class="t" style='top:376px;font:16px/1 "Liberation Sans", sans-serif;color:#000;left:-129.50px;width:600px;text-align:center;'>25</div>
<div class="t" style='top:376px;font:16px/1 "Liberation Sans", sans-serif;color:#000;left:-55.50px;width:600px;text-align:center;'>26</div>
<div class="t" style='top:376px;font:16px/1 "Liberation Sans", sans-serif;color:#000;left:19.00px;width:600px;text-align:center;'>27</div>
<div class="t" style='top:376px;font:16px/1 "Liberation Sans", sans-serif;color:#000;left:89.50px;width:600px;text-align:center;'>28</div>
<div class="t" style='top:376px;font:16px/1 "Liberation Sans", sans-serif;color:#000;left:163.00px;width:600px;text-align:center;'>29</div>
<div class="t" style='top:376px;font:16px/1 "Liberation Sans", sans-serif;color:#000;left:241.00px;width:600px;text-align:center;'>30</div>
<div class="t" style='top:430px;font:bold 16.2px/1 "Liberation Mono", monospace;color:#000;letter-spacing:1.3px;left:60.20px;width:600px;text-align:center;'>EXPENSES</div>
<div class="t" style='top:459px;font:14px/1 "Liberation Sans", sans-serif;color:#000;letter-spacing:0.15px;left:-166.50px;width:600px;text-align:center;'>DATE</div>
<div class="t" style='top:459px;font:14px/1 "Liberation Sans", sans-serif;color:#000;letter-spacing:0.15px;left:-16.00px;width:600px;text-align:center;'>EXPENSE</div>
<div class="t" style='top:459px;font:14px/1 "Liberation Sans", sans-serif;color:#000;letter-spacing:0.15px;left:132.00px;width:600px;text-align:center;'>AMOUNT</div>
<div class="t" style='top:459px;font:14px/1 "Liberation Sans", sans-serif;color:#000;letter-spacing:0.15px;left:283.50px;width:600px;text-align:center;'>TYPE</div>
<div class="t" style='top:491px;font:13.9px/1 "Liberation Serif", serif;color:#000;left:213.75px;transform:scaleX(0.958);transform-origin:0 50%;'>RENT</div>
<div class="t" style='top:486px;font:17.8px/1 "Liberation Serif", serif;color:#000;left:132.00px;width:600px;text-align:center;'>5,000</div>
<div class="t" style='top:489px;font:16.67px/1 "Liberation Serif", serif;color:#5a3286;left:524.50px;'>ESSENTIAL</div>
<div class="t" style='top:516px;font:13.9px/1 "Liberation Serif", serif;color:#000;left:213.75px;transform:scaleX(0.958);transform-origin:0 50%;'>WATER</div>
<div class="t" style='top:514px;font:16.67px/1 "Liberation Serif", serif;color:#5a3286;left:524.50px;'>ESSENTIAL</div>
<div class="t" style='top:546px;font:13.9px/1 "Liberation Serif", serif;color:#000;left:213.75px;transform:scaleX(0.958);transform-origin:0 50%;'>ELECTRICITY</div>
<div class="t" style='top:541px;font:17.8px/1 "Liberation Serif", serif;color:#000;left:132.00px;width:600px;text-align:center;'>1,500</div>
<div class="t" style='top:544px;font:16.67px/1 "Liberation Serif", serif;color:#5a3286;left:524.50px;'>ESSENTIAL</div>
<div class="t" style='top:575px;font:13.9px/1 "Liberation Serif", serif;color:#000;left:213.75px;transform:scaleX(0.958);transform-origin:0 50%;'>CREDIT CARD</div>
<div class="t" style='top:570px;font:17.8px/1 "Liberation Serif", serif;color:#000;left:132.00px;width:600px;text-align:center;'>5,000</div>
<div class="t" style='top:573px;font:16.67px/1 "Liberation Serif", serif;color:#b10202;left:524.50px;'>NON-ESS…</div>
<div class="t" style='top:603px;font:15px/1 "Liberation Serif", serif;color:#000;left:-167.70px;width:600px;text-align:center;'>Apr-01-2023</div>
<div class="t" style='top:604px;font:13.9px/1 "Liberation Serif", serif;color:#000;left:213.75px;transform:scaleX(0.958);transform-origin:0 50%;'>MILK</div>
<div class="t" style='top:599px;font:17.8px/1 "Liberation Serif", serif;color:#000;left:132.00px;width:600px;text-align:center;'>2,000</div>
<div class="t" style='top:602px;font:16.67px/1 "Liberation Serif", serif;color:#5a3286;left:524.50px;'>ESSENTIAL</div>
<div class="t" style='top:632px;font:15px/1 "Liberation Serif", serif;color:#000;left:-167.70px;width:600px;text-align:center;'>Apr-05-2023</div>
<div class="t" style='top:633px;font:13.9px/1 "Liberation Serif", serif;color:#000;left:213.75px;transform:scaleX(0.958);transform-origin:0 50%;'>SALARY EXPENSE</div>
<div class="t" style='top:628px;font:17.8px/1 "Liberation Serif", serif;color:#000;left:132.00px;width:600px;text-align:center;'>5,000</div>
<div class="t" style='top:631px;font:16.67px/1 "Liberation Serif", serif;color:#b10202;left:524.50px;'>NON-ESS…</div>
<div class="t" style='top:662px;font:13.9px/1 "Liberation Serif", serif;color:#000;left:213.75px;transform:scaleX(0.958);transform-origin:0 50%;'>SELF MAINTENANCE</div>
<div class="t" style='top:657px;font:17.8px/1 "Liberation Serif", serif;color:#000;left:132.00px;width:600px;text-align:center;'>500</div>
<div class="t" style='top:660px;font:16.67px/1 "Liberation Serif", serif;color:#b10202;left:524.50px;'>NON-ESS…</div>
<div class="t" style='top:687px;font:13.9px/1 "Liberation Serif", serif;color:#000;left:213.75px;transform:scaleX(0.958);transform-origin:0 50%;'>SAVINGS</div>
<div class="t" style='top:685px;font:16.67px/1 "Liberation Serif", serif;color:#b10202;left:524.50px;'>NON-ESS…</div>
<div class="t" style='top:715px;font:13.9px/1 "Liberation Serif", serif;color:#000;left:213.75px;transform:scaleX(0.958);transform-origin:0 50%;'>GROCERY</div>
<div class="t" style='top:714px;font:16.67px/1 "Liberation Serif", serif;color:#5a3286;left:524.50px;'>ESSENTIAL</div>
<div class="t" style='top:745px;font:13.9px/1 "Liberation Serif", serif;color:#000;left:213.75px;transform:scaleX(0.958);transform-origin:0 50%;'>ALLOWANCE</div>
<div class="t" style='top:740px;font:17.8px/1 "Liberation Serif", serif;color:#000;left:132.00px;width:600px;text-align:center;'>2,000</div>
<div class="t" style='top:743px;font:16.67px/1 "Liberation Serif", serif;color:#b10202;left:524.50px;'>NON-ESS…</div>
<div class="t" style='top:774px;font:13.9px/1 "Liberation Serif", serif;color:#000;left:213.75px;transform:scaleX(0.958);transform-origin:0 50%;'>KIDS SAVINGS</div>
<div class="t" style='top:769px;font:17.8px/1 "Liberation Serif", serif;color:#000;left:132.00px;width:600px;text-align:center;'>1,000</div>
<div class="t" style='top:772px;font:16.67px/1 "Liberation Serif", serif;color:#b10202;left:524.50px;'>NON-ESS…</div>
<div class="t" style='top:799px;font:13.9px/1 "Liberation Serif", serif;color:#000;left:213.75px;transform:scaleX(0.958);transform-origin:0 50%;'>OTHER EXPENSES</div>
<div class="t" style='top:797px;font:16.67px/1 "Liberation Serif", serif;color:#b10202;left:524.50px;'>NON-ESS…</div>
<div class="t" style='top:855px;font:bold 14.7px/1 "Liberation Mono", monospace;color:#000;letter-spacing:1.2px;left:60.10px;width:600px;text-align:center;'>TO DO LIST</div>
<div class="t" style='top:215px;font:16.67px/1 "Liberation Sans", sans-serif;color:#000;left:1148.90px;width:600px;text-align:center;'>MONTHLY PLAN AND LEAVE</div>
<div class="t" style='top:246px;font:16.67px/1 "Liberation Sans", sans-serif;color:#000;left:825.50px;width:600px;text-align:center;'>M</div>
<div class="t" style='top:246px;font:16.67px/1 "Liberation Sans", sans-serif;color:#000;left:938.50px;width:600px;text-align:center;'>T</div>
<div class="t" style='top:246px;font:16.67px/1 "Liberation Sans", sans-serif;color:#000;left:1046.50px;width:600px;text-align:center;'>W</div>
<div class="t" style='top:246px;font:16.67px/1 "Liberation Sans", sans-serif;color:#000;left:1154.50px;width:600px;text-align:center;'>T</div>
<div class="t" style='top:246px;font:16.67px/1 "Liberation Sans", sans-serif;color:#000;left:1262.50px;width:600px;text-align:center;'>F</div>
<div class="t" style='top:246px;font:16.67px/1 "Liberation Sans", sans-serif;color:#000;left:1370.50px;width:600px;text-align:center;'>S</div>
<div class="t" style='top:246px;font:16.67px/1 "Liberation Sans", sans-serif;color:#000;left:1478.50px;width:600px;text-align:center;'>S</div>
<div class="t" style='top:302px;font:12.5px/1 "Liberation Mono", monospace;color:#000;letter-spacing:1.35px;left:1046.50px;width:600px;text-align:center;'>Leave <span style='font-family:"DejaVu Sans",sans-serif;font-size:18px;line-height:0;letter-spacing:0;position:relative;top:0.5px'>✈</span></div>
<div class="t" style='top:302px;font:12.5px/1 "Liberation Mono", monospace;color:#000;letter-spacing:1.35px;left:1154.50px;width:600px;text-align:center;'>Holy <span class="chw" role="img" aria-label="church"><svg class="ch" width="17" height="18" viewBox="0 0 17 18"><path d="M4 0.300 V2.500 M3 1.200 H5" stroke="#b8860b" stroke-width="0.900" fill="none"/><path d="M1.300 17 V6.300 L4 2.800 L6.700 6.300 V8 L8 6.300 H14 L16.200 9.500 V17 Z" fill="#f4f4f4" stroke="#111" stroke-width="1.300" stroke-linejoin="round"/><path d="M7 8.200 L8.300 6.800 H13.800 L15.600 9.300 H7 Z" fill="#e8413c"/><path d="M1.900 6.400 L4 3.700 L6.100 6.400 Z" fill="#e8413c"/><circle cx="4" cy="8.300" r="1.250" fill="#5cc3f0"/><path d="M2.800 16.400 V13.300 a1.200 1.200 0 0 1 2.400 0 V16.400 Z" fill="#e8413c"/><rect x="8.300" y="11" width="1.500" height="3.500" fill="#5cc3f0"/><rect x="10.700" y="11" width="1.500" height="3.500" fill="#5cc3f0"/><rect x="13.100" y="11" width="1.500" height="3.500" fill="#5cc3f0"/></svg></span></div>
<div class="t" style='top:302px;font:12.5px/1 "Liberation Mono", monospace;color:#000;letter-spacing:1.35px;left:1262.50px;width:600px;text-align:center;'>Holy <span class="chw" role="img" aria-label="church"><svg class="ch" width="17" height="18" viewBox="0 0 17 18"><path d="M4 0.300 V2.500 M3 1.200 H5" stroke="#b8860b" stroke-width="0.900" fill="none"/><path d="M1.300 17 V6.300 L4 2.800 L6.700 6.300 V8 L8 6.300 H14 L16.200 9.500 V17 Z" fill="#f4f4f4" stroke="#111" stroke-width="1.300" stroke-linejoin="round"/><path d="M7 8.200 L8.300 6.800 H13.800 L15.600 9.300 H7 Z" fill="#e8413c"/><path d="M1.900 6.400 L4 3.700 L6.100 6.400 Z" fill="#e8413c"/><circle cx="4" cy="8.300" r="1.250" fill="#5cc3f0"/><path d="M2.800 16.400 V13.300 a1.200 1.200 0 0 1 2.400 0 V16.400 Z" fill="#e8413c"/><rect x="8.300" y="11" width="1.500" height="3.500" fill="#5cc3f0"/><rect x="10.700" y="11" width="1.500" height="3.500" fill="#5cc3f0"/><rect x="13.100" y="11" width="1.500" height="3.500" fill="#5cc3f0"/></svg></span></div>
<div class="t" style='top:302px;font:12.5px/1 "Liberation Mono", monospace;color:#000;letter-spacing:1.35px;left:1370.50px;width:600px;text-align:center;'>Holy <span class="chw" role="img" aria-label="church"><svg class="ch" width="17" height="18" viewBox="0 0 17 18"><path d="M4 0.300 V2.500 M3 1.200 H5" stroke="#b8860b" stroke-width="0.900" fill="none"/><path d="M1.300 17 V6.300 L4 2.800 L6.700 6.300 V8 L8 6.300 H14 L16.200 9.500 V17 Z" fill="#f4f4f4" stroke="#111" stroke-width="1.300" stroke-linejoin="round"/><path d="M7 8.200 L8.300 6.800 H13.800 L15.600 9.300 H7 Z" fill="#e8413c"/><path d="M1.900 6.400 L4 3.700 L6.100 6.400 Z" fill="#e8413c"/><circle cx="4" cy="8.300" r="1.250" fill="#5cc3f0"/><path d="M2.800 16.400 V13.300 a1.200 1.200 0 0 1 2.400 0 V16.400 Z" fill="#e8413c"/><rect x="8.300" y="11" width="1.500" height="3.500" fill="#5cc3f0"/><rect x="10.700" y="11" width="1.500" height="3.500" fill="#5cc3f0"/><rect x="13.100" y="11" width="1.500" height="3.500" fill="#5cc3f0"/></svg></span></div>
<div class="t" style='top:302px;font:12.5px/1 "Liberation Mono", monospace;color:#000;letter-spacing:1.35px;left:1478.50px;width:600px;text-align:center;'>Holy <span class="chw" role="img" aria-label="church"><svg class="ch" width="17" height="18" viewBox="0 0 17 18"><path d="M4 0.300 V2.500 M3 1.200 H5" stroke="#b8860b" stroke-width="0.900" fill="none"/><path d="M1.300 17 V6.300 L4 2.800 L6.700 6.300 V8 L8 6.300 H14 L16.200 9.500 V17 Z" fill="#f4f4f4" stroke="#111" stroke-width="1.300" stroke-linejoin="round"/><path d="M7 8.200 L8.300 6.800 H13.800 L15.600 9.300 H7 Z" fill="#e8413c"/><path d="M1.900 6.400 L4 3.700 L6.100 6.400 Z" fill="#e8413c"/><circle cx="4" cy="8.300" r="1.250" fill="#5cc3f0"/><path d="M2.800 16.400 V13.300 a1.200 1.200 0 0 1 2.400 0 V16.400 Z" fill="#e8413c"/><rect x="8.300" y="11" width="1.500" height="3.500" fill="#5cc3f0"/><rect x="10.700" y="11" width="1.500" height="3.500" fill="#5cc3f0"/><rect x="13.100" y="11" width="1.500" height="3.500" fill="#5cc3f0"/></svg></span></div>
<div class="t" style='top:328px;font:12.5px/1 "Liberation Mono", monospace;color:#000;letter-spacing:1.35px;left:825.50px;width:600px;text-align:center;'>Holiday</div>
<div class="t" style='top:328px;font:12.5px/1 "Liberation Mono", monospace;color:#000;letter-spacing:1.35px;left:938.50px;width:600px;text-align:center;'>Leave <span style='font-family:"DejaVu Sans",sans-serif;font-size:18px;line-height:0;letter-spacing:0;position:relative;top:0.5px'>✈</span></div>
<div class="t" style='top:543px;font:15px/1 "Liberation Sans", sans-serif;color:#000;letter-spacing:0.9px;left:564.00px;width:600px;text-align:center;'>HABIT</div>
<div class="t" style='top:543px;font:15px/1 "Liberation Sans", sans-serif;color:#000;left:703.50px;width:600px;text-align:center;'>M</div>
<div class="t" style='top:543px;font:15px/1 "Liberation Sans", sans-serif;color:#000;left:825.50px;width:600px;text-align:center;'>T</div>
<div class="t" style='top:543px;font:15px/1 "Liberation Sans", sans-serif;color:#000;left:938.50px;width:600px;text-align:center;'>W</div>
<div class="t" style='top:543px;font:15px/1 "Liberation Sans", sans-serif;color:#000;left:1046.50px;width:600px;text-align:center;'>T</div>
<div class="t" style='top:543px;font:15px/1 "Liberation Sans", sans-serif;color:#000;left:1154.50px;width:600px;text-align:center;'>F</div>
<div class="t" style='top:543px;font:15px/1 "Liberation Sans", sans-serif;color:#000;left:1262.50px;width:600px;text-align:center;'>S</div>
<div class="t" style='top:543px;font:15px/1 "Liberation Sans", sans-serif;color:#000;left:1370.50px;width:600px;text-align:center;'>S</div>
<div class="t" style='top:573px;font:16.67px/1 "Liberation Serif", serif;color:#000;left:791.60px;'>Wake Up at 7</div>
<div class="t" style='top:602px;font:16.67px/1 "Liberation Serif", serif;color:#000;left:791.60px;'>Drink 60ML Water</div>
<div class="t" style='top:631px;font:16.67px/1 "Liberation Serif", serif;color:#000;left:791.60px;'>Workout</div>
<div class="t" style='top:660px;font:16.67px/1 "Liberation Serif", serif;color:#000;left:791.60px;'>Update Files</div>
<div class="t" style='top:685px;font:16.67px/1 "Liberation Serif", serif;color:#000;left:791.60px;'>Side Hustle</div>
<div class="t" style='top:711px;font:16.67px/1 "Liberation Serif", serif;color:#000;left:791.60px;'>Diet</div>
<div class="t" style='top:743px;font:16.67px/1 "Liberation Sans", sans-serif;color:#000;left:703.50px;width:600px;text-align:center;'>33%</div>
<div class="t" style='top:743px;font:16.67px/1 "Liberation Sans", sans-serif;color:#000;left:825.50px;width:600px;text-align:center;'>33%</div>
<div class="t" style='top:743px;font:16.67px/1 "Liberation Sans", sans-serif;color:#000;left:938.50px;width:600px;text-align:center;'>0%</div>
<div class="t" style='top:743px;font:16.67px/1 "Liberation Sans", sans-serif;color:#000;left:1046.50px;width:600px;text-align:center;'>0%</div>
<div class="t" style='top:743px;font:16.67px/1 "Liberation Sans", sans-serif;color:#000;left:1154.50px;width:600px;text-align:center;'>0%</div>
<div class="t" style='top:743px;font:16.67px/1 "Liberation Sans", sans-serif;color:#000;left:1262.50px;width:600px;text-align:center;'>0%</div>
<div class="t" style='top:743px;font:16.67px/1 "Liberation Sans", sans-serif;color:#000;left:1370.50px;width:600px;text-align:center;'>0%</div>
<div class="t" style='top:796px;font:16.3px/1 "Liberation Sans", sans-serif;color:#000;letter-spacing:-0.65px;left:792.00px;'>PAYCHECK</div>
<div class="t" style='top:821px;font:16.3px/1 "Liberation Sans", sans-serif;color:#000;letter-spacing:-0.2px;left:792.00px;'>LEFT TO BUDGET</div>
<div class="t" style='top:822px;font:16px/1 "Liberation Sans", sans-serif;color:#000;letter-spacing:-0.5px;left:460.30px;width:600px;text-align:right;'>23,500</div>
</section>
<section id="charts">
<div class="t" style='top:255px;font:15px/1 "Liberation Sans", sans-serif;color:#2b2b2b;left:439.00px;width:600px;text-align:right;'>ESSENTIAL</div>
<div class="t" style='top:274px;font:15px/1 "Liberation Sans", sans-serif;color:#9e9e9e;left:439.00px;width:600px;text-align:right;'>38.6%</div>
<div class="t" style='top:310px;font:15px/1 "Liberation Sans", sans-serif;color:#2b2b2b;left:604.20px;'>NON-ESSENTIAL</div>
<div class="t" style='top:329px;font:15px/1 "Liberation Sans", sans-serif;color:#9e9e9e;left:604.20px;'>61.4%</div>
<div class="t" style='top:803px;font:25px/1 "Liberation Sans", sans-serif;color:#757575;left:1211.40px;'>BUDGET</div>
<div class="t" style='top:836px;font:15px/1 "Liberation Sans", sans-serif;color:#2b2b2b;left:1211.40px;'>SAVINGS</div>
<div class="t" style='top:855px;font:15px/1 "Liberation Sans", sans-serif;color:#9e9e9e;left:1211.40px;'>16.2%</div>
</section>
<section id="headers">
<div class="t" style='top:185px;font:13.5px/1 "Liberation Sans", sans-serif;color:#444746;left:-203.00px;width:600px;text-align:center;'>A</div>
<div class="t" style='top:185px;font:13.5px/1 "Liberation Sans", sans-serif;color:#444746;left:-127.00px;width:600px;text-align:center;'>B</div>
<div class="t" style='top:185px;font:13.5px/1 "Liberation Sans", sans-serif;color:#444746;left:-53.00px;width:600px;text-align:center;'>C</div>
<div class="t" style='top:185px;font:13.5px/1 "Liberation Sans", sans-serif;color:#444746;left:21.50px;width:600px;text-align:center;'>D</div>
<div class="t" style='top:185px;font:13.5px/1 "Liberation Sans", sans-serif;color:#444746;left:92.00px;width:600px;text-align:center;'>E</div>
<div class="t" style='top:185px;font:13.5px/1 "Liberation Sans", sans-serif;color:#444746;left:165.50px;width:600px;text-align:center;'>F</div>
<div class="t" style='top:185px;font:13.5px/1 "Liberation Sans", sans-serif;color:#444746;left:243.50px;width:600px;text-align:center;'>G</div>
<div class="t" style='top:185px;font:13.5px/1 "Liberation Sans", sans-serif;color:#444746;left:321.50px;width:600px;text-align:center;'>H</div>
<div class="t" style='top:185px;font:13.5px/1 "Liberation Sans", sans-serif;color:#444746;left:425.00px;width:600px;text-align:center;'>I</div>
<div class="t" style='top:185px;font:13.5px/1 "Liberation Sans", sans-serif;color:#1f1f1f;left:564.50px;width:600px;text-align:center;'>J</div>
<div class="t" style='top:185px;font:13.5px/1 "Liberation Sans", sans-serif;color:#444746;left:704.00px;width:600px;text-align:center;'>K</div>
<div class="t" style='top:185px;font:13.5px/1 "Liberation Sans", sans-serif;color:#444746;left:826.00px;width:600px;text-align:center;'>L</div>
<div class="t" style='top:185px;font:13.5px/1 "Liberation Sans", sans-serif;color:#444746;left:939.00px;width:600px;text-align:center;'>M</div>
<div class="t" style='top:185px;font:13.5px/1 "Liberation Sans", sans-serif;color:#444746;left:1047.00px;width:600px;text-align:center;'>N</div>
<div class="t" style='top:185px;font:13.5px/1 "Liberation Sans", sans-serif;color:#444746;left:1155.00px;width:600px;text-align:center;'>O</div>
<div class="t" style='top:185px;font:13.5px/1 "Liberation Sans", sans-serif;color:#444746;left:1263.00px;width:600px;text-align:center;'>P</div>
<div class="t" style='top:185px;font:13.5px/1 "Liberation Sans", sans-serif;color:#444746;left:1371.00px;width:600px;text-align:center;'>Q</div>
<div class="t" style='top:185px;font:13.5px/1 "Liberation Sans", sans-serif;color:#444746;left:1479.00px;width:600px;text-align:center;'>R</div>
<div class="t" style='top:215px;font:13.5px/1 "Liberation Sans", sans-serif;color:#444746;left:-272.00px;width:600px;text-align:center;'>1</div>
<div class="t" style='top:244px;font:13.5px/1 "Liberation Sans", sans-serif;color:#444746;left:-272.00px;width:600px;text-align:center;'>2</div>
<div class="t" style='top:271px;font:13.5px/1 "Liberation Sans", sans-serif;color:#444746;left:-272.00px;width:600px;text-align:center;'>3</div>
<div class="t" style='top:297px;font:13.5px/1 "Liberation Sans", sans-serif;color:#444746;left:-272.00px;width:600px;text-align:center;'>4</div>
<div class="t" style='top:323px;font:13.5px/1 "Liberation Sans", sans-serif;color:#444746;left:-272.00px;width:600px;text-align:center;'>5</div>
<div class="t" style='top:349px;font:13.5px/1 "Liberation Sans", sans-serif;color:#444746;left:-272.00px;width:600px;text-align:center;'>6</div>
<div class="t" style='top:375px;font:13.5px/1 "Liberation Sans", sans-serif;color:#444746;left:-272.00px;width:600px;text-align:center;'>7</div>
<div class="t" style='top:401px;font:13.5px/1 "Liberation Sans", sans-serif;color:#444746;left:-272.00px;width:600px;text-align:center;'>8</div>
<div class="t" style='top:430px;font:13.5px/1 "Liberation Sans", sans-serif;color:#444746;left:-272.00px;width:600px;text-align:center;'>9</div>
<div class="t" style='top:458px;font:13.5px/1 "Liberation Sans", sans-serif;color:#444746;left:-272.00px;width:600px;text-align:center;'>10</div>
<div class="t" style='top:487px;font:13.5px/1 "Liberation Sans", sans-serif;color:#444746;left:-272.00px;width:600px;text-align:center;'>11</div>
<div class="t" style='top:513px;font:13.5px/1 "Liberation Sans", sans-serif;color:#444746;left:-272.00px;width:600px;text-align:center;'>12</div>
<div class="t" style='top:542px;font:13.5px/1 "Liberation Sans", sans-serif;color:#444746;left:-272.00px;width:600px;text-align:center;'>13</div>
<div class="t" style='top:571px;font:13.5px/1 "Liberation Sans", sans-serif;color:#444746;left:-272.00px;width:600px;text-align:center;'>14</div>
<div class="t" style='top:600px;font:13.5px/1 "Liberation Sans", sans-serif;color:#444746;left:-272.00px;width:600px;text-align:center;'>15</div>
<div class="t" style='top:629px;font:13.5px/1 "Liberation Sans", sans-serif;color:#444746;left:-272.00px;width:600px;text-align:center;'>16</div>
<div class="t" style='top:658px;font:13.5px/1 "Liberation Sans", sans-serif;color:#444746;left:-272.00px;width:600px;text-align:center;'>17</div>
<div class="t" style='top:684px;font:13.5px/1 "Liberation Sans", sans-serif;color:#444746;left:-272.00px;width:600px;text-align:center;'>18</div>
<div class="t" style='top:711px;font:13.5px/1 "Liberation Sans", sans-serif;color:#444746;left:-272.00px;width:600px;text-align:center;'>19</div>
<div class="t" style='top:741px;font:13.5px/1 "Liberation Sans", sans-serif;color:#444746;left:-272.00px;width:600px;text-align:center;'>20</div>
<div class="t" style='top:770px;font:13.5px/1 "Liberation Sans", sans-serif;color:#444746;left:-272.00px;width:600px;text-align:center;'>21</div>
<div class="t" style='top:797px;font:13.5px/1 "Liberation Sans", sans-serif;color:#444746;left:-272.00px;width:600px;text-align:center;'>22</div>
<div class="t" style='top:824px;font:13.5px/1 "Liberation Sans", sans-serif;color:#444746;left:-272.00px;width:600px;text-align:center;'>23</div>
<div class="t" style='top:853px;font:13.5px/1 "Liberation Sans", sans-serif;color:#444746;left:-272.00px;width:600px;text-align:center;'>24</div>
</section>
</main>
<footer id="sheet-tabs">
<div class="a" style="left:0;top:880px;width:1850px;height:16px;background:#fff"></div>
<div class="a" style="left:0;top:880px;width:57px;height:14px;background:#f8f9fa;border-right:1px solid #c7c7c7"></div>
<div class="a" style="left:0;top:880px;width:1850px;height:1px;background:#e1e1e1"></div>
<div class="a" style="left:59px;top:882px;width:1109px;height:12px;border-radius:6px;background:#dadce0"></div>
<div class="a" style="left:1797px;top:881px;width:53px;height:15px;background:#f8f9fa"></div>
<div class="a" style="left:1797px;top:881px;width:1px;height:15px;background:#dadce0"></div>
<div class="a" style="left:1817px;top:881px;width:1px;height:15px;background:#dadce0"></div>
<div class="a" style="left:1835px;top:881px;width:1px;height:15px;background:#dadce0"></div>
<svg class="a" style="left:1803.50px;top:884.00px" width="5" height="8" viewBox="0 0 5 8"><path d="M5 0 V8 L0 4Z" fill="#80868b"/></svg>
<svg class="a" style="left:1825.00px;top:884.00px" width="5" height="8" viewBox="0 0 5 8"><path d="M0 0 V8 L5 4Z" fill="#80868b"/></svg>
<div class="a" style="left:1836px;top:207px;width:14px;height:673px;background:#fff"></div>
<div class="a" style="left:1837px;top:208px;width:12px;height:33px;border-radius:6px;background:#dadce0"></div>
<div class="a" style="left:1836px;top:841px;width:14px;height:39px;background:#fff;border-top:1px solid #dadce0"></div>
<div class="a" style="left:1836px;top:861px;width:14px;height:1px;background:#dadce0"></div>
<div class="a" style="left:1836px;top:859.500px;width:9px;height:1px;background:#a8c7fa"></div>
<svg class="a" style="left:1838.80px;top:848.00px" width="8" height="5" viewBox="0 0 8 5"><path d="M0 5 H8 L4 0Z" fill="#80868b"/></svg>
<svg class="a" style="left:1838.80px;top:868.50px" width="8" height="5" viewBox="0 0 8 5"><path d="M0 0 H8 L4 5Z" fill="#80868b"/></svg>
<div class="a" style="left:0;top:896px;width:1850px;height:46px;background:#f9fbfd;border-top:1px solid #e1e3e1;box-sizing:border-box"></div>
<div class="a" style="left:166px;top:897px;width:106px;height:45px;background:#e1e9f7"></div>
<svg class="a" style="left:70.00px;top:913.00px" width="13" height="13" viewBox="0 0 13 13"><path d="M0 6.500 H13 M6.500 0 V13" stroke="#444746" stroke-width="2" fill="none"/></svg>
<svg class="a" style="left:117.50px;top:913.30px" width="18" height="13" viewBox="0 0 18 13"><path d="M0 1.400 H17.500 M0 6.200 H17.500 M0 11 H17.500" stroke="#444746" stroke-width="2" fill="none"/></svg>
<div class="t" style='top:912px;font:17px/1 "Liberation Sans", sans-serif;color:#0b57d0;letter-spacing:0.5px;left:181.50px;-webkit-text-stroke:0.45px #0b57d0;'>APRIL</div>
<svg class="a" style="left:247.50px;top:917.00px" width="10" height="5.0" viewBox="0 0 10 5.0"><path d="M0 0 H10 L5.0 5.0 Z" fill="#0b57d0"/></svg>
<svg class="a" style="left:1801.50px;top:907.00px" width="23" height="25.5" viewBox="0 0 23 25.5"><path d="M3 0 H20 a3 3 0 0 1 3 3 V18 a3 3 0 0 1 -3 3 H15 L11.500 25 L8 21 H3 a3 3 0 0 1 -3 -3 V3 a3 3 0 0 1 3 -3Z" fill="#747775"/><path d="M11.500 3.500 Q12.500 9.500 18.500 10.500 Q12.500 11.500 11.500 17.500 Q10.500 11.500 4.500 10.500 Q10.500 9.500 11.500 3.500Z" fill="#fff"/></svg>
</footer>
<aside id="side-panel">
<div class="a" style="left:1850px;top:0;width:70px;height:942px;background:#f9fbfd"></div>
<svg class="a" style="left:1873.70px;top:97.00px" width="23" height="23" viewBox="0 0 23 23"><rect x="0" y="0" width="23" height="23" rx="2.500" fill="#4285f4"/><rect x="17.500" y="0" width="5.500" height="17.500" fill="#fbbc04"/><path d="M17.500 0 H20.500 a2.500 2.500 0 0 1 2.500 2.500 V5.500 H17.500Z" fill="#1967d2"/><rect x="0" y="17.500" width="17.500" height="5.500" fill="#34a853"/><path d="M0 17.500 H5.500 V23 H2.500 a2.500 2.500 0 0 1 -2.500 -2.500Z" fill="#188038"/><path d="M17.500 17.500 H23 L17.500 23Z" fill="#ea4335"/><rect x="5.300" y="5.300" width="12.400" height="12.400" fill="#fff"/></svg>
<div class="t" style='top:104px;font:bold 9.5px/1 "Liberation Sans", sans-serif;color:#4285f4;letter-spacing:-0.3px;left:1585.20px;width:600px;text-align:center;'>31</div>
<svg class="a" style="left:1873.70px;top:166.70px" width="23.5" height="23.5" viewBox="0 0 23.5 23.5"><rect width="23.500" height="23.500" rx="2" fill="#fbbc04"/><circle cx="11.750" cy="10.200" r="4.600" fill="#fff"/><rect x="9.300" y="13.500" width="4.900" height="2.200" fill="#fff"/><rect x="9.300" y="16.800" width="4.900" height="1.500" fill="#fff"/></svg>
<svg class="a" style="left:1874.80px;top:237.50px" width="23" height="22" viewBox="0 0 23 22"><circle cx="10.500" cy="11.500" r="8.600" fill="none" stroke="#1a73e8" stroke-width="3.400"/><path d="M14.500 4.800 L18.500 0.800 L22 4.200 L18 8.200Z" fill="#1558d6"/><path d="M6 11.500 L9.600 15 L18.600 6" fill="none" stroke="#1a73e8" stroke-width="3"/></svg>
<svg class="a" style="left:1876.50px;top:307.50px" width="18" height="21" viewBox="0 0 18 21"><circle cx="9" cy="4.500" r="4.300" fill="#1a73e8"/><path d="M0.500 21 V16 a6 6 0 0 1 6 -6 H11.500 a6 6 0 0 1 6 6 V21Z" fill="#1a56d6"/><path d="M0.500 21 V17 a4 4 0 0 1 3 -3.800 V21Z M17.500 21 V17 a4 4 0 0 0 -3 -3.800 V21Z" fill="#8ab4f8"/></svg>
<svg class="a" style="left:1878.00px;top:377.70px" width="15.5" height="22" viewBox="0 0 15.5 22"><path d="M7.750 0 a7.750 7.750 0 0 1 7.750 7.750 c0 4.500 -5 8 -7.750 14 c-2.750 -6 -7.750 -9.500 -7.750 -14 a7.750 7.750 0 0 1 7.750 -7.750Z" fill="#34a853"/><path d="M7.750 0 a7.750 7.750 0 0 1 7 4.500 L7.750 11 L2 4 a7.750 7.750 0 0 1 5.750 -4Z" fill="#4285f4"/><path d="M2 4 L7.750 10 L2.500 14 C0.800 12 0 10 0 7.750 a7.750 7.750 0 0 1 2 -3.750Z" fill="#fbbc04"/><path d="M2.200 3.600 a7.750 7.750 0 0 1 3 -3 L8 5 L5 8Z" fill="#ea4335"/><circle cx="7.750" cy="7.750" r="2.900" fill="#fff"/></svg>
<div class="a" style="left:1873px;top:444px;width:25px;height:1px;background:#dadce0"></div>
<svg class="a" style="left:1876.70px;top:491.00px" width="17.5" height="17.5" viewBox="0 0 17.5 17.5"><path d="M0 8.500 H17.500 M8.750 0 V17" stroke="#1f1f1f" stroke-width="1.800" fill="none"/></svg>
<svg class="a" style="left:1874.00px;top:896.50px" width="22" height="22" viewBox="0 0 24 24"><path d="M10 6L8.59 7.41 13.17 12l-4.580 4.590L10 18l6-6z" fill="#1f1f1f"/></svg>
</aside>
<header id="docs-chrome">
<svg class="a" style="left:27.00px;top:20.00px" width="31" height="43" viewBox="0 0 31 43"><path d="M3 0 H20 L31 11 V40 a3 3 0 0 1 -3 3 H3 a3 3 0 0 1 -3 -3 V3 a3 3 0 0 1 3 -3Z" fill="#0f9d58"/><path d="M20 0 L31 11 H23 a3 3 0 0 1 -3 -3Z" fill="#087f45"/><path d="M6.500 19.500 H24.500 V33.500 H6.500Z M9 22 V25.300 H14.200 V22Z M16.800 22 V25.300 H22 V22Z M9 27.700 V31 H14.200 V27.700Z M16.800 27.700 V31 H22 V27.700Z" fill="#fff" fill-rule="evenodd"/></svg>
<div class="t" style='top:16px;font:22px/1 "Liberation Sans", sans-serif;color:#1f1f1f;letter-spacing:-1.45px;left:77.20px;'>TRACKER</div>
<svg class="a" style="left:201.00px;top:17.00px" width="22" height="22" viewBox="0 0 24 24"><path d="M22 9.24l-7.19-.62L12 2 9.19 8.63 2 9.24l5.46 4.73L5.82 21 12 17.27 18.18 21l-1.63-7.03L22 9.24zM12 15.4l-3.76 2.27 1-4.28-3.32-2.88 4.38-.38L12 6.1l1.71 4.04 4.38.38-3.32 2.88 1 4.28L12 15.4z" fill="#444746"/></svg>
<svg class="a" style="left:241.50px;top:17.00px" width="22" height="22" viewBox="0 0 24 24"><path d="M20 6h-8l-2-2H4c-1.1 0-2 .9-2 2v12c0 1.1.9 2 2 2h16c1.1 0 2-.9 2-2V8c0-1.1-.9-2-2-2zm0 12H4V6h5.17l2 2H20v10zm-8-1l4-4-4-4v3H8v2h4v3z" fill="#444746"/></svg>
<svg class="a" style="left:281.00px;top:17.00px" width="22" height="22" viewBox="0 0 24 24"><path d="M19.35 10.04C18.67 6.59 15.64 4 12 4 9.11 4 6.6 5.64 5.35 8.04 2.34 8.36 0 10.91 0 14c0 3.31 2.69 6 6 6h13c2.76 0 5-2.24 5-5 0-2.64-2.05-4.78-4.65-4.96zM19 18H6c-2.21 0-4-1.79-4-4s1.79-4 4-4h.71C7.37 7.69 9.48 6 12 6c3.04 0 5.5 2.46 5.5 5.5v.5H19c1.66 0 3 1.34 3 3s-1.34 3-3 3zm-9-3.82l-2.09-2.09L6.5 13.5 10 17l6.01-6.01-1.41-1.41z" fill="#444746"/></svg>
<div class="t" style='top:48px;font:18px/1 "Liberation Sans", sans-serif;color:#1f1f1f;letter-spacing:-0.1px;left:78.00px;'>File</div>
<div class="t" style='top:48px;font:18px/1 "Liberation Sans", sans-serif;color:#1f1f1f;letter-spacing:-0.1px;left:125.50px;'>Edit</div>
<div class="t" style='top:48px;font:18px/1 "Liberation Sans", sans-serif;color:#1f1f1f;letter-spacing:-0.1px;left:176.50px;'>View</div>
<div class="t" style='top:48px;font:18px/1 "Liberation Sans", sans-serif;color:#1f1f1f;letter-spacing:-0.1px;left:234.00px;'>Insert</div>
<div class="t" style='top:48px;font:18px/1 "Liberation Sans", sans-serif;color:#1f1f1f;letter-spacing:-0.1px;left:301.00px;'>Format</div>
<div class="t" style='top:48px;font:18px/1 "Liberation Sans", sans-serif;color:#1f1f1f;letter-spacing:-0.1px;left:378.00px;'>Data</div>
<div class="t" style='top:48px;font:18px/1 "Liberation Sans", sans-serif;color:#1f1f1f;letter-spacing:-0.1px;left:436.00px;'>Tools</div>
<div class="t" style='top:48px;font:18px/1 "Liberation Sans", sans-serif;color:#1f1f1f;letter-spacing:-0.1px;left:498.50px;'>Extensions</div>
<div class="t" style='top:48px;font:18px/1 "Liberation Sans", sans-serif;color:#1f1f1f;letter-spacing:-0.1px;left:605.00px;'>Help</div>
<svg class="a" style="left:1486.85px;top:21.25px" width="32.5" height="32.5" viewBox="0 0 24 24"><path d="M12 21q-3.450 0-6.012-2.287T3.050 13H5.100q.350 2.600 2.313 4.300T12 19q2.925 0 4.963-2.037T19 12t-2.037-4.963T12 5q-1.725 0-3.225.800T6.250 8H9v2H3V4h2v2.350q1.275-1.600 3.113-2.475T12 3q1.875 0 3.513.713t2.850 1.924 1.925 2.850T21 12t-.712 3.513-1.925 2.850-2.850 1.925T12 21m2.800-4.800L11 12.400V7h2v4.600l3.200 3.200z" fill="#444746"/></svg>
<svg class="a" style="left:1550.25px;top:22.85px" width="29.5" height="29.5" viewBox="0 0 24 24"><path d="M21.99 4c0-1.1-.89-2-1.99-2H4c-1.1 0-2 .9-2 2v12c0 1.1.9 2 2 2h14l4 4-.01-18zM20 4v13.17L18.83 16H4V4h16zM6 12h12v2H6zm0-3h12v2H6zm0-3h12v2H6z" fill="#444746"/></svg>
<svg class="a" style="left:1619.20px;top:28.20px" width="26" height="20" viewBox="0 0 26 20"><path d="M7 1.300 H17.300 a1.600 1.600 0 0 1 1.600 1.600 V16.900 a1.600 1.600 0 0 1 -1.600 1.600 H2.900 a1.600 1.600 0 0 1 -1.600 -1.600 V7 Z" fill="none" stroke="#444746" stroke-width="2.500" stroke-linejoin="round"/><path d="M19.500 7.800 L25.700 2.800 V17 L19.500 12 Z" fill="#444746"/></svg>
<svg class="a" style="left:1658.00px;top:34.50px" width="10" height="5.0" viewBox="0 0 10 5.0"><path d="M0 0 H10 L5.0 5.0 Z" fill="#444746"/></svg>
<div class="a" style="left:1696px;top:13px;width:134px;height:50px;border-radius:25px;background:#c2e7ff"></div>
<svg class="a" style="left:1717.00px;top:26.00px" width="22" height="22" viewBox="0 0 24 24"><path d="M18 8h-1V6c0-2.76-2.24-5-5-5S7 3.240 7 6v2H6c-1.100 0-2 .9-2 2v10c0 1.100.9 2 2 2h12c1.100 0 2-.9 2-2V10c0-1.100-.9-2-2-2zM9 6c0-1.660 1.340-3 3-3s3 1.340 3 3v2H9V6zm9 14H6V10h12v10zm-6-3c1.100 0 2-.9 2-2s-.9-2-2-2-2 .9-2 2 .9 2 2 2z" fill="#001d35"/></svg>
<div class="t" style='top:28px;font:18px/1 "Liberation Sans", sans-serif;color:#001d35;letter-spacing:0.2px;left:1750.50px;-webkit-text-stroke:0.3px #001d35;'>Share</div>
<svg class="a" style="left:1855.00px;top:18.00px" width="40" height="40" viewBox="0 0 40 40"><defs><clipPath id="avc"><circle cx="20" cy="20" r="20"/></clipPath><filter id="avb" x="-20%" y="-20%" width="140%" height="140%"><feGaussianBlur stdDeviation="1.1"/></filter></defs><g clip-path="url(#avc)"><rect width="40" height="40" fill="#c8987a"/><g filter="url(#avb)"><rect x="28" y="0" width="12" height="40" fill="#b98866"/><ellipse cx="21" cy="12" rx="8" ry="13" fill="#f6f2f1"/><ellipse cx="26" cy="30" rx="9" ry="7" fill="#d9a98e"/><ellipse cx="30" cy="32" rx="6" ry="3" fill="#c8813a"/><ellipse cx="6" cy="20" rx="8" ry="9" fill="#ecc9c0"/><ellipse cx="13" cy="26" rx="6" ry="7" fill="#e6bfb2"/><path d="M2 11 Q6 2 13 4 Q17 8 15 15 Q10 9 2 13Z" fill="#1d1416"/><path d="M4 9 Q9 5 14 11" stroke="#ddd" stroke-width="1.2" fill="none"/><ellipse cx="3.500" cy="25" rx="2.200" ry="1.300" fill="#d2324a"/><path d="M9 40 L19 28 L23 31 L18 40Z" fill="#f5a21c"/><path d="M19 28 L21 29 L17 40 L15.500 40Z" fill="#f3efee"/><ellipse cx="6" cy="33" rx="6" ry="2.500" fill="#8a5a4a"/><ellipse cx="8" cy="31" rx="6" ry="1.300" fill="#f0e6e0"/></g></g></svg>
<div class="a" style="left:20px;top:81px;width:1810px;height:50px;border-radius:25px;background:#edf2fa"></div>
<svg class="a" style="left:43.50px;top:99.70px" width="19" height="16" viewBox="0 0 19 16"><g  fill="none" stroke="#444746" stroke-width="1.9" stroke-linejoin="round"><path d="M2.500 6.300 H11.800 a3.800 3.800 0 0 1 0 7.600 H3.800"/><path d="M6.800 1.800 L2.300 6.300 L6.800 10.800"/></g></svg>
<svg class="a" style="left:81.50px;top:99.70px" width="19" height="16" viewBox="0 0 19 16"><g transform="translate(19.0,0) scale(-1,1)" fill="none" stroke="#444746" stroke-width="1.9" stroke-linejoin="round"><path d="M2.500 6.300 H11.800 a3.800 3.800 0 0 1 0 7.600 H3.800"/><path d="M6.800 1.800 L2.300 6.300 L6.800 10.800"/></g></svg>
<svg class="a" style="left:119.00px;top:94.70px" width="24" height="24" viewBox="0 0 24 24"><path d="M19 8h-1V3H6v5H5c-1.66 0-3 1.34-3 3v6h4v4h12v-4h4v-6c0-1.66-1.34-3-3-3zM8 5h8v3H8V5zm8 12v2H8v-4h8v2zm2-2v-2H6v2H4v-4c0-.55.45-1 1-1h14c.55 0 1 .45 1 1v4h-2z" fill="#444746"/></svg>
<svg class="a" style="left:136.90px;top:105.10px" width="3" height="3" viewBox="0 0 3 3"><circle cx="1.1" cy="1.1" r="1.1" fill="#444746"/></svg>
<svg class="a" style="left:160.80px;top:96.50px" width="19" height="22" viewBox="0 0 19 22"><g fill="none" stroke="#444746" stroke-width="1.9" stroke-linejoin="round"><rect x="4.900" y="1" width="12.600" height="5.400" rx="1"/><path d="M4.900 3.700 H1.400 V9.800 H11.100 V13.500"/><rect x="9" y="14" width="4.200" height="6.400" rx="0.600"/></g></svg>
<div class="t" style='top:99px;font:17.5px/1 "Liberation Sans", sans-serif;color:#444746;letter-spacing:0.45px;left:201.30px;'>100%</div>
<svg class="a" style="left:264.00px;top:104.00px" width="10" height="5.0" viewBox="0 0 10 5.0"><path d="M0 0 H10 L5.0 5.0 Z" fill="#444746"/></svg>
<div class="a" style="left:290px;top:94px;width:1px;height:25px;background:#c7c7c7"></div>
<div class="t" style='top:98px;font:16.5px/1 "Liberation Sans", sans-serif;color:#444746;left:14.00px;width:600px;text-align:center;'>£</div>
<div class="t" style='top:98px;font:16.5px/1 "Liberation Sans", sans-serif;color:#444746;left:53.00px;width:600px;text-align:center;'>%</div>
<div class="t" style='top:96px;font:14px/1 "Liberation Sans", sans-serif;color:#444746;letter-spacing:-0.3px;left:382.30px;-webkit-text-stroke:0.5px #444746;'>.0</div>
<svg class="a" style="left:393.30px;top:109.70px" width="11" height="8" viewBox="0 0 11 8"><path d="M10 4 H2 M5 1 L2 4 L5 7" fill="none" stroke="#444746" stroke-width="1.5"/></svg>
<div class="t" style='top:96px;font:14px/1 "Liberation Sans", sans-serif;color:#444746;letter-spacing:-0.6px;left:422.30px;-webkit-text-stroke:0.5px #444746;'>.00</div>
<svg class="a" style="left:432.60px;top:109.70px" width="11" height="8" viewBox="0 0 11 8"><path d="M1 4 H9 M6 1 L9 4 L6 7" fill="none" stroke="#444746" stroke-width="1.5"/></svg>
<div class="t" style='top:99px;font:16px/1 "Liberation Sans", sans-serif;color:#444746;left:173.60px;width:600px;text-align:center;transform:scaleX(0.84);'>123</div>
<div class="a" style="left:499px;top:94px;width:1px;height:25px;background:#c7c7c7"></div>
<div class="t" style='top:98px;font:17.5px/1 "Liberation Sans", sans-serif;color:#444746;letter-spacing:0.25px;left:518.00px;'>Defaul...</div>
<svg class="a" style="left:601.00px;top:103.50px" width="10" height="5.0" viewBox="0 0 10 5.0"><path d="M0 0 H10 L5.0 5.0 Z" fill="#444746"/></svg>
<div class="a" style="left:630px;top:94px;width:1px;height:25px;background:#c7c7c7"></div>
<svg class="a" style="left:643.50px;top:105.00px" width="13" height="2" viewBox="0 0 13 2"><rect x="0" y="0" width="13" height="2" fill="#444746"/></svg>
<div class="a" style="left:670px;top:91px;width:40px;height:28px;border:1px solid #747775;border-radius:5px"></div>
<div class="t" style='top:98px;font:17px/1 "Liberation Sans", sans-serif;color:#444746;left:391.00px;width:600px;text-align:center;'>10</div>
<svg class="a" style="left:723.50px;top:100.00px" width="13" height="13" viewBox="0 0 13 13"><path d="M0 6 H13 M6.500 -0.500 V12.500" stroke="#444746" stroke-width="2" fill="none"/></svg>
<div class="a" style="left:751px;top:94px;width:1px;height:25px;background:#c7c7c7"></div>
<svg class="a" style="left:763.00px;top:94.50px" width="24" height="24" viewBox="0 0 24 24"><path d="M15.6 10.79c.97-.67 1.65-1.77 1.65-2.79 0-2.26-1.75-4-4-4H7v14h7.04c2.09 0 3.71-1.7 3.71-3.79 0-1.52-.86-2.82-2.15-3.42zM10 6.5h3c.83 0 1.5.67 1.5 1.5s-.67 1.5-1.5 1.5h-3v-3zm3.5 9H10v-3h3.5c.83 0 1.5.67 1.5 1.5s-.67 1.5-1.5 1.5z" fill="#444746"/></svg>
<svg class="a" style="left:802.50px;top:94.50px" width="24" height="24" viewBox="0 0 24 24"><path d="M10 4v3h2.21l-3.420 8H6v3h8v-3h-2.210l3.420-8H18V4z" fill="#444746"/></svg>
<div class="t" style='top:95px;font:21px/1 "Liberation Sans", sans-serif;color:#444746;left:554.20px;width:600px;text-align:center;transform:scaleX(0.8);-webkit-text-stroke:0.35px #444746;'>S</div>
<div class="a" style="left:843.8px;top:104.4px;width:20.4px;height:1.9px;background:#444746;box-shadow:0 0 0 1.3px #edf2fa"></div>
<div class="t" style='top:97px;font:17.5px/1 "Liberation Sans", sans-serif;color:#444746;left:595.00px;width:600px;text-align:center;'>A</div>
<div class="a" style="left:881px;top:114px;width:28px;height:5px;background:#000"></div>
<div class="a" style="left:920px;top:94px;width:1px;height:25px;background:#c7c7c7"></div>
<svg class="a" style="left:934.50px;top:92.00px" width="21" height="21" viewBox="0 0 24 24"><path d="M16.56 8.94L7.62 0 6.21 1.41l2.38 2.38-5.15 5.15c-.59.59-.59 1.54 0 2.12l5.5 5.5c.29.29.68.44 1.06.44s.77-.15 1.06-.44l5.5-5.5c.59-.58.59-1.53 0-2.12zM5.21 10L10 5.21 14.79 10H5.21zM19 11.5s-2 2.17-2 3.5c0 1.1.9 2 2 2s2-.9 2-2c0-1.33-2-3.5-2-3.5z" fill="#444746"/></svg>
<div class="a" style="left:931px;top:114px;width:29px;height:5px;background:#fff"></div>
<svg class="a" style="left:974.50px;top:94.50px" width="24" height="24" viewBox="0 0 24 24"><path d="M3 3v18h18V3H3zm8 16H5v-6h6v6zm0-8H5V5h6v6zm8 8h-6v-6h6v6zm0-8h-6V5h6v6z" fill="#444746"/></svg>
<svg class="a" style="left:1018.00px;top:98.00px" width="22" height="18" viewBox="0 0 22 18"><g fill="none" stroke="#b5b8ba" stroke-width="1.700"><path d="M2.400 5.300 V1 H7 M13 1 H19.500 V5.300 M2.400 12.300 V16.700 H7 M13 16.700 H19.500 V12.300" transform="translate(0,0)"/><path d="M0.800 8.900 H8.400 M5.800 6.100 L8.700 8.900 L5.800 11.700 M21.200 8.900 H13.600 M16.200 6.100 L13.300 8.900 L16.200 11.700" stroke-width="1.500"/></g></svg>
<svg class="a" style="left:1049.00px;top:103.50px" width="10" height="5.0" viewBox="0 0 10 5.0"><path d="M0 0 H10 L5.0 5.0 Z" fill="#b5b8ba"/></svg>
<div class="a" style="left:1066px;top:94px;width:1px;height:25px;background:#c7c7c7"></div>
<svg class="a" style="left:1077.00px;top:94.90px" width="23.2" height="23.2" viewBox="0 0 24 24"><path d="M15 15H3v2h12v-2zm0-8H3v2h12V7zM3 13h18v-2H3v2zm0 8h18v-2H3v2zM3 3v2h18V3H3z" fill="#444746"/></svg>
<svg class="a" style="left:1106.00px;top:103.50px" width="10" height="5.0" viewBox="0 0 10 5.0"><path d="M0 0 H10 L5.0 5.0 Z" fill="#444746"/></svg>
<svg class="a" style="left:1131.00px;top:97.80px" width="16" height="18" viewBox="0 0 16 18"><path d="M8 0 V12.300 M3.100 7.600 L8 12.500 L12.900 7.600 M0.300 16.300 H15.700" fill="none" stroke="#444746" stroke-width="1.900"/></svg>
<svg class="a" style="left:1156.00px;top:103.50px" width="10" height="5.0" viewBox="0 0 10 5.0"><path d="M0 0 H10 L5.0 5.0 Z" fill="#444746"/></svg>
<svg class="a" style="left:1181.50px;top:98.50px" width="16" height="15" viewBox="0 0 16 15"><g fill="none" stroke="#444746" stroke-width="1.8"><path d="M1 0 V15 M14.500 0 V15"/><path d="M4 5 H9 a2.600 2.600 0 0 1 0 5.200 H5.500 M7.800 7.500 L5 10.200 L7.800 12.900" stroke-width="1.6"/></g></svg>
<svg class="a" style="left:1207.00px;top:103.50px" width="10" height="5.0" viewBox="0 0 10 5.0"><path d="M0 0 H10 L5.0 5.0 Z" fill="#444746"/></svg>
<div class="t" style='top:97px;font:16px/1 "Liberation Sans", sans-serif;color:#444746;left:940.00px;width:600px;text-align:center;'>A</div>
<svg class="a" style="left:1233.20px;top:108.60px" width="17" height="8" viewBox="0 0 17 8"><path d="M0 4 H15 M11.500 0.800 L15 4 L11.500 7.200" fill="none" stroke="#444746" stroke-width="1.6"/></svg>
<svg class="a" style="left:1258.00px;top:103.50px" width="10" height="5.0" viewBox="0 0 10 5.0"><path d="M0 0 H10 L5.0 5.0 Z" fill="#444746"/></svg>
<div class="a" style="left:1278px;top:94px;width:1px;height:25px;background:#c7c7c7"></div>
<svg class="a" style="left:1289.50px;top:94.50px" width="24" height="24" viewBox="0 0 24 24"><path d="M3.9 12c0-1.71 1.39-3.1 3.1-3.1h4V7H7c-2.76 0-5 2.24-5 5s2.24 5 5 5h4v-1.9H7c-1.71 0-3.1-1.39-3.1-3.1zM8 13h8v-2H8v2zm9-6h-4v1.9h4c1.71 0 3.1 1.39 3.1 3.1s-1.39 3.1-3.1 3.1h-4V17h4c2.76 0 5-2.24 5-5s-2.24-5-5-5z" fill="#444746"/></svg>
<svg class="a" style="left:1330.00px;top:95.00px;transform:scaleX(-1)" width="23" height="23" viewBox="0 0 24 24"><path d="M22 4c0-1.1-.9-2-2-2H4c-1.1 0-2 .9-2 2v12c0 1.1.9 2 2 2h14l4 4V4zm-2 13.17L18.83 16H4V4h16v13.17zM13 5h-2v4H7v2h4v4h2v-4h4V9h-4z" fill="#444746"/></svg>
<svg class="a" style="left:1370.00px;top:95.00px" width="23" height="23" viewBox="0 0 24 24"><path d="M9 17H7v-7h2v7zm4 0h-2V7h2v10zm4 0h-2v-4h2v4zm2 2H5V5h14v14zm0-16H5c-1.1 0-2 .9-2 2v14c0 1.1.9 2 2 2h14c1.1 0 2-.9 2-2V5c0-1.1-.9-2-2-2z" fill="#444746"/></svg>
<svg class="a" style="left:1408.50px;top:95.00px" width="23" height="23" viewBox="0 0 24 24"><path d="M7 6h10l-5.01 6.3L7 6zm-2.75-.39C6.27 8.2 10 13 10 13v6c0 .55.45 1 1 1h2c.55 0 1-.45 1-1v-6s3.72-4.8 5.74-7.39c.51-.66.04-1.61-.79-1.61H5.04c-.83 0-1.3.95-.79 1.61z" fill="#444746"/></svg>
<svg class="a" style="left:1441.00px;top:103.50px" width="10" height="5.0" viewBox="0 0 10 5.0"><path d="M0 0 H10 L5.0 5.0 Z" fill="#444746"/></svg>
<svg class="a" style="left:1465.00px;top:95.50px" width="22" height="22" viewBox="0 0 24 24"><path d="M18 4H6v2l6.5 6L6 18v2h12v-3h-7l5-5-5-5h7z" fill="#444746"/></svg>
<svg class="a" style="left:1783.50px;top:94.00px" width="24" height="24" viewBox="0 0 24 24"><path d="M12 8l-6 6 1.41 1.41L12 10.830l4.590 4.580L18 14z" fill="#444746"/></svg>
<div class="a" style="left:0;top:141px;width:1850px;height:35px;background:#fff"></div>
<div class="t" style='top:151px;font:15.5px/1 "Liberation Sans", sans-serif;color:#1f1f1f;letter-spacing:-0.8px;left:17.80px;'>J41</div>
<svg class="a" style="left:107.00px;top:156.00px" width="10" height="5.0" viewBox="0 0 10 5.0"><path d="M0 0 H10 L5.0 5.0 Z" fill="#444746"/></svg>
<div class="a" style="left:132px;top:149px;width:1px;height:21px;background:#c7c7c7"></div>
<div class="t" style='top:148px;font:italic bold 19.5px/1 "Liberation Serif", serif;color:#989ca1;letter-spacing:0.3px;left:147.50px;'>fx</div>
</header>
</body></html>
